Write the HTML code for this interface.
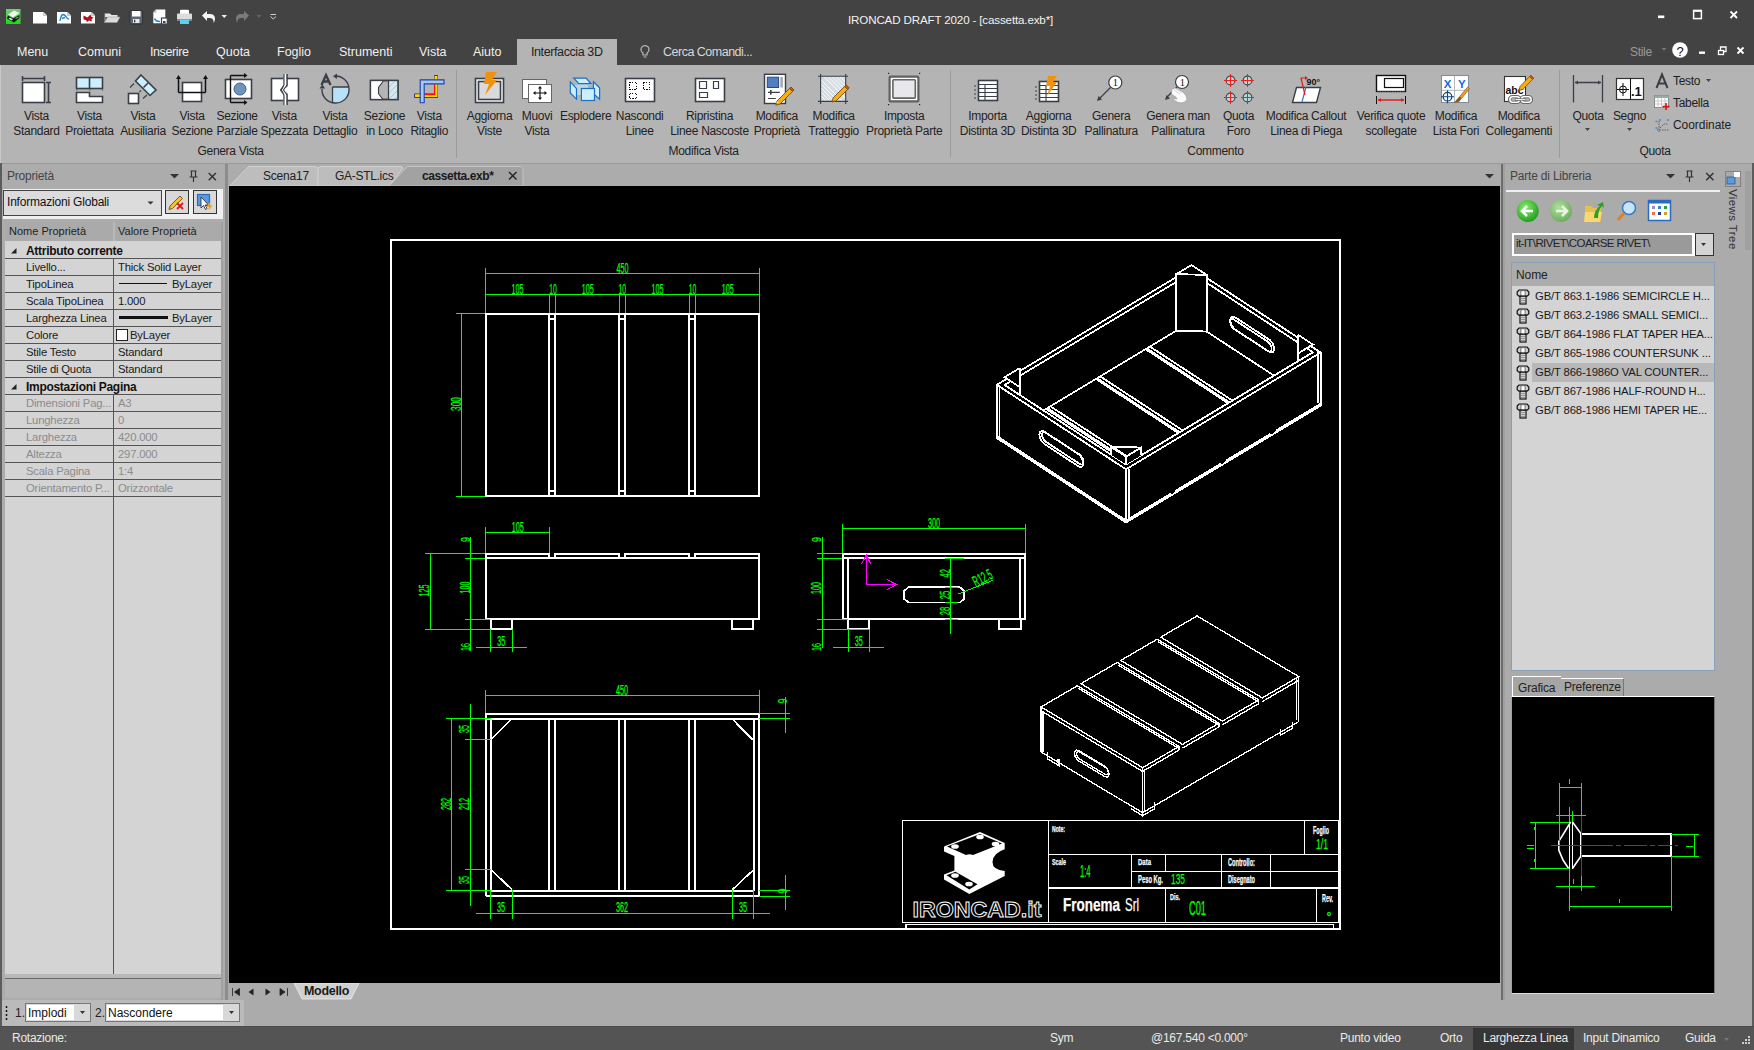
<!DOCTYPE html>
<html><head><meta charset="utf-8">
<style>
*{margin:0;padding:0;box-sizing:border-box}
html,body{width:1754px;height:1050px;overflow:hidden;background:#ababab;font-family:"Liberation Sans",sans-serif;font-size:12px;color:#1e1e1e}
.a{position:absolute}
.t{position:absolute;white-space:nowrap;line-height:1}
#title{left:0;top:0;width:1754px;height:38px;background:#434343}
#menu{left:0;top:38px;width:1754px;height:27px;background:#434343}
.mt{position:absolute;top:45.8px;color:#f0f0f0;font-size:12.5px;white-space:nowrap;line-height:1}
#ribbon{left:0;top:65px;width:1754px;height:99px;background:#b4b4b4;border-left:1px solid #c8c8c8;border-bottom:1px solid #9a9a9a}
.rl{position:absolute;font-size:12px;letter-spacing:-0.3px;color:#222;text-align:center;white-space:nowrap;line-height:15px}
.gl{position:absolute;top:144.5px;font-size:12px;letter-spacing:-0.3px;color:#222;white-space:nowrap;line-height:1}
.sep{position:absolute;top:70px;width:1px;height:88px;background:#9c9c9c}
#status{left:0;top:1026px;width:1754px;height:24px;background:#545454;border-top:1px solid #4a4a4a}
.st{position:absolute;top:1032px;color:#eaeaea;font-size:12px;letter-spacing:-0.25px;white-space:nowrap;line-height:1}
</style></head><body>
<div id="title" class="a"></div>
<div id="menu" class="a"></div>
<div class="t" style="left:848px;top:13.5px;color:#f2f2f2;font-size:11.6px;letter-spacing:-0.15px">IRONCAD DRAFT 2020 - [cassetta.exb*]</div>

<div class="mt" style="left:17px">Menu</div>
<div class="mt" style="left:78px">Comuni</div>
<div class="mt" style="left:150px;letter-spacing:-0.4px">Inserire</div>
<div class="mt" style="left:216px">Quota</div>
<div class="mt" style="left:277px">Foglio</div>
<div class="mt" style="left:339px">Strumenti</div>
<div class="mt" style="left:419px">Vista</div>
<div class="mt" style="left:473px">Aiuto</div>
<div class="a" style="left:517px;top:39px;width:100px;height:27px;background:#b4b4b4"></div>
<div class="mt" style="left:531px;color:#222;letter-spacing:-0.4px">Interfaccia 3D</div>
<div class="mt" style="left:663px;color:#d8d8d8;letter-spacing:-0.5px">Cerca Comandi...</div>
<div class="mt" style="left:1630px;color:#9a9a9a;font-size:12px;top:46px;letter-spacing:-0.3px">Stile</div>

<div id="ribbon" class="a"></div>

<svg class="a" style="left:0;top:0" width="1754" height="165" viewBox="0 0 1754 165">
<!-- QAT -->
<defs><linearGradient id="appg" x1="0" y1="0" x2="0" y2="1"><stop offset="0" stop-color="#7ac87a"/><stop offset="1" stop-color="#10e010"/></linearGradient></defs>
<rect x="6" y="9" width="14.5" height="15" fill="url(#appg)"/>
<path d="M8 14.5 L14 10.5 L19.5 13 L13 17.5Z" fill="#f4f4f4"/>
<path d="M8 15.5 L13 18.5 L19.5 15 L19.5 18 L14 22.5 L7 18.5Z" fill="#111"/>
<path d="M8.5 18.5l3 2l1.5-1l-3-2z" fill="#ddd"/><path d="M15.5 18l3-1.5v1l-3 1.5z" fill="#bbb"/>
<path d="M33 12h10.5l3.5 3.5v8h-14z" fill="#fff"/><path d="M43.5 12v3.5h3.5" fill="#ccc" stroke="#aaa" stroke-width="0.5"/>
<path d="M57 12h10.5l3.5 3.5v8h-14z" fill="#fff"/><path d="M67.5 12v3.5h3.5" fill="#ccc" stroke="#aaa" stroke-width="0.5"/>
<path d="M61 15.5q3-2 5 1.5M60 21q1-6 3-6.5q2 0 4 3.5l2 1.5M62 18.5l3-1" stroke="#1e88d8" stroke-width="1.4" fill="none"/>
<path d="M81 12h10.5l3.5 3.5v8h-14z" fill="#fff"/><path d="M91.5 12v3.5h3.5" fill="#ccc" stroke="#aaa" stroke-width="0.5"/>
<path d="M83.5 15.5l4 2l3-3l1 2.5l2 0.5l-2 2l0.5 2l-3-1l-2 1.5l-1-2l-2.5-0.5z" fill="#b80818"/><path d="M87 18l2 1l2-1" stroke="#e02020" stroke-width="1"/>
<path d="M105 13.5h5l1.5 1.5h6v2h-12.5z" fill="#e8e8e8"/><path d="M104.5 22.5l3-5.5h12.5l-3 5.5z" fill="#dcdcdc" stroke="#9a9a9a" stroke-width="0.6"/><path d="M105 13.5v9" stroke="#bbb" stroke-width="0.8"/>
<rect x="130" y="10.5" width="12.5" height="13.5" rx="1.5" fill="#5c6676" stroke="#2a2a2a" stroke-width="0.8"/><rect x="132" y="11" width="8.5" height="5.5" fill="#fff"/><rect x="133" y="19" width="6.5" height="4" fill="#e8e8e8"/><rect x="134" y="19.8" width="1.3" height="2.6" fill="#333"/>
<path d="M156 9.5h9.3v13.8h-12v-11z" fill="#fff"/><path d="M156 9.5v2.8h-2.7" fill="#ccc" stroke="#999" stroke-width="0.5"/>
<rect x="161.5" y="18" width="5.8" height="6" fill="#fff" stroke="#3a4456" stroke-width="1.2"/><rect x="163" y="21" width="2.5" height="2" fill="#3a4456"/>
<path d="M154.5 18.5q1 3 5.5 3" stroke="#1e88d8" stroke-width="1.5" fill="none"/>
<rect x="180" y="9.8" width="9" height="4.5" rx="1" fill="#fff"/><rect x="177" y="13.5" width="15" height="7" rx="0.8" fill="#dcdcdc"/><rect x="177" y="19" width="15" height="1.5" fill="#888"/><rect x="180" y="19.5" width="9" height="4.5" fill="#5bd0f5"/>
<path d="M202 15.5 l5 -4.5 v3 h3 q5 0 5 5 q0 2 -1.5 4 q0.5 -5 -4 -5 h-2.5 v3z" fill="#f4f4f4"/>
<path d="M221.5 15h5.5l-2.75 3z" fill="#f2f2f2"/>
<path d="M249 15.5 l-5 -4.5 v3 h-3 q-5 0 -5 5 q0 2 1.5 4 q-0.5 -5 4 -5 h2.5 v3z" fill="#7a7a7a"/>
<path d="M256.5 15h5l-2.5 2.8z" fill="#666"/>
<path d="M270.5 14.5h5.5M270.5 16.5l2.75 2.5l2.75 -2.5" stroke="#d0d0d0" fill="none" stroke-width="1"/>
<!-- window controls -->
<rect x="1658" y="15.5" width="6.3" height="2.6" fill="#fff"/>
<rect x="1693.6" y="10.6" width="7.8" height="8" fill="none" stroke="#fff" stroke-width="1.5"/><rect x="1693" y="9.8" width="9" height="2" fill="#fff"/>
<path d="M1730.5 11.5l6.5 6.5M1737 11.5l-6.5 6.5" stroke="#fff" stroke-width="1.8"/>
<!-- second row right -->
<path d="M1661.5 48h5l-2.5 2.8z" fill="#777"/>
<circle cx="1680" cy="50" r="7.8" fill="#fff"/>
<text x="1680" y="55.5" font-size="13" fill="#111" text-anchor="middle" font-family="Liberation Sans">?</text>
<rect x="1699" y="51.5" width="6" height="2.4" fill="#fff"/>
<rect x="1718.5" y="50.5" width="5" height="4" fill="none" stroke="#fff" stroke-width="1.3"/><path d="M1720.5 50v-3h5.5v4.5h-2" fill="none" stroke="#fff" stroke-width="1.3"/>
<path d="M1737.5 47.5l6 6M1743.5 47.5l-6 6" stroke="#fff" stroke-width="1.8"/>
<!-- lightbulb -->
<path d="M643 53 a4 4 0 1 1 4 0 v2 h-4z M643.5 57h3" fill="none" stroke="#bbb" stroke-width="1.2"/>
</svg>


<div class="rl" style="left:-23.5px;top:109px;width:120px">Vista<br>Standard</div>
<div class="rl" style="left:29.4px;top:109px;width:120px">Vista<br>Proiettata</div>
<div class="rl" style="left:83.0px;top:109px;width:120px">Vista<br>Ausiliaria</div>
<div class="rl" style="left:132.1px;top:109px;width:120px">Vista<br>Sezione</div>
<div class="rl" style="left:177.1px;top:109px;width:120px">Sezione<br>Parziale</div>
<div class="rl" style="left:224.3px;top:109px;width:120px">Vista<br>Spezzata</div>
<div class="rl" style="left:275.0px;top:109px;width:120px">Vista<br>Dettaglio</div>
<div class="rl" style="left:324.5px;top:109px;width:120px">Sezione<br>in Loco</div>
<div class="rl" style="left:369.3px;top:109px;width:120px">Vista<br>Ritaglio</div>
<div class="rl" style="left:429.5px;top:109px;width:120px">Aggiorna<br>Viste</div>
<div class="rl" style="left:477.0px;top:109px;width:120px">Muovi<br>Vista</div>
<div class="rl" style="left:525.6px;top:109px;width:120px">Esplodere</div>
<div class="rl" style="left:579.7px;top:109px;width:120px">Nascondi<br>Linee</div>
<div class="rl" style="left:649.5px;top:109px;width:120px">Ripristina<br>Linee Nascoste</div>
<div class="rl" style="left:716.8px;top:109px;width:120px">Modifica<br>Proprietà</div>
<div class="rl" style="left:773.6px;top:109px;width:120px">Modifica<br>Tratteggio</div>
<div class="rl" style="left:844.2px;top:109px;width:120px">Imposta<br>Proprietà Parte</div>
<div class="rl" style="left:927.5px;top:109px;width:120px">Importa<br>Distinta 3D</div>
<div class="rl" style="left:988.7px;top:109px;width:120px">Aggiorna<br>Distinta 3D</div>
<div class="rl" style="left:1051.2px;top:109px;width:120px">Genera<br>Pallinatura</div>
<div class="rl" style="left:1118.0px;top:109px;width:120px">Genera man<br>Pallinatura</div>
<div class="rl" style="left:1178.5px;top:109px;width:120px">Quota<br>Foro</div>
<div class="rl" style="left:1246.1px;top:109px;width:120px">Modifica Callout<br>Linea di Piega</div>
<div class="rl" style="left:1331.0px;top:109px;width:120px">Verifica quote<br>scollegate</div>
<div class="rl" style="left:1395.9px;top:109px;width:120px">Modifica<br>Lista Fori</div>
<div class="rl" style="left:1458.8px;top:109px;width:120px">Modifica<br>Collegamenti</div>
<div class="rl" style="left:1528.0px;top:109px;width:120px">Quota</div>
<div class="rl" style="left:1569.5px;top:109px;width:120px">Segno</div>
<div class="gl" style="left:170.6px;width:120px;text-align:center">Genera Vista</div>
<div class="gl" style="left:643.6px;width:120px;text-align:center">Modifica Vista</div>
<div class="gl" style="left:1155.5px;width:120px;text-align:center">Commento</div>
<div class="gl" style="left:1595.0px;width:120px;text-align:center">Quota</div>
<div class="sep" style="left:456.0px"></div>
<div class="sep" style="left:950.0px"></div>
<div class="sep" style="left:1559.0px"></div>
<div class="t" style="left:1673px;top:75px;font-size:12px;letter-spacing:-0.3px">Testo</div>
<div class="t" style="left:1673px;top:97px;font-size:12px;letter-spacing:-0.3px">Tabella</div>
<div class="t" style="left:1673px;top:119px;font-size:12px;letter-spacing:-0.05px">Coordinate</div>

<svg class="a" style="left:0;top:65px" width="1754" height="100" viewBox="0 65 1754 100">
<g stroke="#3a3f47" stroke-width="1.6" fill="#fff">
<!-- Vista Standard -->
<rect x="22.5" y="82.5" width="22" height="20"/>
<path d="M22.5 78.5h22M22.5 76v5M44.5 76v5M48.5 82.5v20M46 82.5h5M46 102.5h5" fill="none"/>
<!-- Vista Proiettata -->
<rect x="76.5" y="77.5" width="26" height="11" fill="#cdeefc"/><path d="M89.5 77.5v11" fill="none"/>
<path d="M76.5 92.5h13v4h13v6h-26z"/>
<path d="M76.5 90h1M89.5 90h1M102 90h1" stroke-width="1"/>
<!-- Vista Ausiliaria -->
<path d="M141 75 L156 90 L150 95.5 L135.5 81z" fill="#cdeefc"/>
<path d="M143.5 87.5 L148 83" fill="none"/>
<rect x="128.5" y="93.5" width="10" height="10"/>
<path d="M130 87.5l4 -4M139.5 92l1.5 -1.5M143 98.5l4 -3.5" fill="none" stroke-width="1.2"/>
<!-- Vista Sezione -->
<rect x="182.5" y="82.5" width="19" height="19"/>
<path d="M178.5 92.5h27M178.5 92.5v-14M205.5 92.5v-14" stroke="#111" stroke-width="1.5" fill="none"/>
<path d="M176 79l2.5 -4l2.5 4zM203 79l2.5 -4l2.5 4z" fill="#111" stroke="none"/>
<!-- Sezione Parziale -->
<rect x="225.5" y="79.5" width="26" height="19"/>
<circle cx="240" cy="89" r="6" fill="#6f93bb" stroke="#3f5f8a" stroke-width="1"/>
<path d="M230.5 75.5v27M230.5 75.5h14M230.5 102.5h14" stroke="#111" stroke-width="1.4" fill="none"/>
<path d="M244 73l3.5 2.5l-3.5 2.5zM244 100l3.5 2.5l-3.5 2.5z" fill="#111" stroke="none"/>
<!-- Vista Spezzata -->
<rect x="271.5" y="78.5" width="27" height="22"/>
<path d="M284 74v12l-3 4l3 4v11M287 74v12l-3 4l3 4v11" fill="none" stroke-width="1.2"/>
<rect x="283.5" y="74" width="3" height="31" fill="#fff" stroke="none"/>
<path d="M284 74v11l-3.5 5l3.5 5v10M287 74v11l-3.5 5l3.5 5v10" fill="none" stroke-width="1.1"/>
<!-- Vista Dettaglio -->
<path d="M332.5 87h16.5a13.5 13.5 0 0 1 -13.5 16h-3z" fill="#b8e0f8" stroke="none"/>
<path d="M334 76.2 A13.3 13.3 0 0 1 349 89" fill="none" stroke-width="1.4"/>
<path d="M349 89 A13.3 13.3 0 0 1 335 103" fill="none" stroke-width="1.4"/>
<path d="M335 103 A13.3 13.3 0 0 1 322 89" fill="none" stroke-width="1.4"/>
<path d="M332.5 87v16M332.5 87h16.5" fill="none" stroke-width="1.3"/>
<path d="M321.5 85l4.5 -10l4.5 10M323.2 81.5h5.6" fill="none" stroke-width="2.3"/>
<path d="M337 73.5l-4 2.8l4 2.8z M319.5 88.5l2.8 -4l2.8 4z" fill="#3a3f47" stroke="none"/>
<!-- Sezione in Loco -->
<rect x="370.5" y="80.5" width="27.5" height="19" fill="#b4b4b4"/>
<path d="M371 81h12.3l-4.8 6.5v6l4.8 6.5h-12.3z" fill="#fff" stroke="none"/>
<path d="M383.3 81l-4.8 6.5v6l4.8 6.5" fill="none" stroke-width="1.1"/>
<rect x="389" y="81" width="8.5" height="18" fill="#d4e8f4" stroke="none"/>
<path d="M389 87l6-6M389 93l8.5-8.5M389 99l8.5-8.5M395 99l2.5-2.5" stroke="#a8bccc" stroke-width="0.8" fill="none"/>
<rect x="370.5" y="80.5" width="27.5" height="19" fill="none" stroke-width="1.3"/>
<path d="M388.5 80.5v19" fill="none" stroke-width="1.2"/>
<!-- Vista Ritaglio -->
<path d="M434.5 75.5h3v19.5h-3zM414.5 94h23v3.5h-23z" fill="#ffd800" stroke="#1a2a70" stroke-width="0.9"/>
<path d="M434.5 76.3h3v20.5h-22.3v-2.3h19.3z" fill="#ffd800" stroke="none"/>
<path d="M434.6 84v10.5h-10.5" fill="none" stroke="#ff1010" stroke-width="1.3"/>
<path d="M420.2 102.7v-22.8h23.8v4h-19.8v18.8z" fill="#a8c8f0" stroke="#1a40b0" stroke-width="1.1"/>
<!-- Aggiorna Viste -->
<rect x="475.5" y="78.5" width="28" height="24"/>
<rect x="478.5" y="81.5" width="22" height="18" fill="#dadada"/>
<path d="M486 72h11l-5 8h5l-12 15l4 -11h-5z" fill="#f0920a" stroke="none"/>
<!-- Muovi Vista -->
<rect x="522.5" y="79.5" width="24" height="19" stroke="#666" stroke-width="1"/>
<rect x="528.5" y="84.5" width="23" height="18" stroke="#666" stroke-width="1"/>
<path d="M540 87v12M534 93h12" stroke="#111" stroke-width="1.2" fill="none"/>
<path d="M538 88.5l2-2.5l2 2.5zM538 97.5l2 2.5l2-2.5zM535.5 91l-2.5 2l2.5 2zM544.5 91l2.5 2l-2.5 2z" fill="#111" stroke="none"/>
<!-- Esplodere -->
<g stroke="#1a70c8" stroke-width="1.2" fill="#cdeefc" stroke-linejoin="miter">
<rect x="574.4" y="84.4" width="14" height="11" fill="#c8d4dc" stroke="#8ab8e0" stroke-width="0.9"/>
<path d="M573.7 78.2h12.3l4.9 5.3h-12.2z"/>
<path d="M570.3 81.8l6.2 6.7v10.6l-6.2-6.1z"/>
<path d="M593.4 81.8l6.2 6v11.3l-6.2-5.4z"/>
<rect x="581.4" y="88.5" width="13.1" height="12"/>
</g>
<!-- Nascondi Linee -->
<rect x="625.5" y="78.5" width="29" height="23"/>
<path d="M629.5 82.5h7v7h-7zM643.5 82.5h6v7h-6zM629.5 93.5h7v5h-7z" stroke="#111" stroke-dasharray="1.3 1.2" stroke-width="1.3" fill="none" shape-rendering="crispEdges"/>
<!-- Ripristina -->
<rect x="695.5" y="78.5" width="29" height="23"/>
<path d="M699.5 81.5h7v7h-7zM713.5 81.5h5v7h-5zM699.5 92.5h8v5h-8z" fill="none" stroke-width="1.2"/>
<!-- Modifica Proprieta -->
<rect x="764.5" y="74.3" width="21" height="29.2" fill="#fff" stroke-width="1.4"/>
<rect x="767.3" y="77.2" width="11.3" height="10.3" fill="#4f7fc0" stroke="#2a4a80" stroke-width="1"/>
<rect x="780.3" y="77" width="2.6" height="10.5" fill="#a8a8b0" stroke="none"/>
<path d="M768 92.4h11.8M768 98.5h7.7" stroke-width="1.1" fill="none"/>
<rect x="770" y="90" width="1.6" height="4.7" fill="#3a3f47" stroke="none"/>
<path d="M777 101l12.5-12.5l3 3l-12.5 12.5l-4.2 1.2z" fill="#f5b010" stroke="#7a4a10" stroke-width="0.9"/>
<path d="M789.5 88.5l1.5-1.5l3 3l-1.5 1.5z" fill="#c05a20" stroke="#7a4a10" stroke-width="0.9"/>
<path d="M777 101l-0.8 2.4l2.4-0.8z" fill="#ddd" stroke="none"/>
<!-- Modifica Tratteggio -->
<rect x="820.6" y="76.2" width="25.1" height="25.2" fill="#d6dde2" stroke="none"/>
<path d="M821 80l21 21M821 84l17 17M821 88l13 13M821 92l9 9M821 96l5 5M824 76.5l21.5 21.5M828 76.5l17.5 17.5M832 76.5l13.5 13.5M836 76.5l9.5 9.5M840 76.5l5.5 5.5" stroke="#fff" stroke-width="0.9"/>
<path d="M820.6 74v30M845.7 74v30M818 76.2h30M818 101.4h30" stroke-width="1.1" fill="none"/>
<path d="M833.2 97.8l11.5-11.5l3 3l-11.5 11.5l-4.2 1.2z" fill="#f5b010" stroke="#7a4a10" stroke-width="0.9"/>
<path d="M844.7 86.3l1.5-1.5l3 3l-1.5 1.5z" fill="#c05a20" stroke="#7a4a10" stroke-width="0.9"/>
<!-- Imposta Proprieta Parte -->
<rect x="889.6" y="76.7" width="28.8" height="24.7" rx="1" fill="#fff" stroke="#606060" stroke-width="2.2"/>
<rect x="892.9" y="79.7" width="22.4" height="18.4" rx="0.8" fill="#e8e8ec" stroke="#666" stroke-width="1.6"/>
<g fill="#222" stroke="none"><rect x="888" y="72.8" width="1.2" height="1.2"/><rect x="919" y="72.8" width="1.2" height="1.2"/><rect x="888" y="104" width="1.2" height="1.2"/><rect x="919" y="104" width="1.2" height="1.2"/></g>
<!-- Importa Distinta -->
<rect x="978.5" y="80.5" width="19" height="20" fill="#fff"/>
<path d="M978.5 84.5h19M978.5 88.5h19M978.5 92.5h19M978.5 96.5h19M985 84.5v16" stroke-width="1.1" fill="none"/>
<path d="M974 86h2M974 90h2M974 94h2M974 98h2" stroke-width="1" fill="none"/>
<!-- Aggiorna Distinta -->
<rect x="1039.5" y="81.5" width="19" height="20" fill="#fff"/>
<path d="M1039.5 85.5h19M1039.5 89.5h19M1039.5 93.5h19M1039.5 97.5h19M1046 85.5v16" stroke-width="1.1" fill="none"/>
<path d="M1035 87h2M1035 91h2M1035 95h2M1035 99h2" stroke-width="1" fill="none"/>
<path d="M1048 76h9l-4 6h4l-10 14l3 -10h-4z" fill="#f0920a" stroke="none"/>
<!-- Genera Pallinatura -->
<circle cx="1115.3" cy="82.5" r="6.5" stroke-width="1.2"/>
<text x="1115.3" y="86.3" font-size="10.5" text-anchor="middle" fill="#111" stroke="none" font-family="Liberation Serif">1</text>
<path d="M1110.5 87.5l-12 12" stroke-width="1.3" fill="none"/><path d="M1097 101l1.5-5l3.5 3.5z" fill="#3a3f47" stroke="none"/>
<!-- Genera man -->
<circle cx="1182" cy="82" r="6.5" stroke-width="1.2"/>
<text x="1182.3" y="85.5" font-size="10.5" text-anchor="middle" fill="#111" stroke="none" font-family="Liberation Serif">1</text>
<path d="M1177 87l-10 10" stroke-width="1.3" fill="none"/><path d="M1165 100l1.5-5l3.5 3.5z" fill="#3a3f47" stroke="none"/>
<path d="M1172 89q3-2 6 0l5 3q4 4 4 7q-1 4-6 4q-4 0-8-4q1-1 4 0q-1-3-5-4q-1-3 0-6z" fill="#fafafa" stroke="#9a9a9a" stroke-width="0.7"/><path d="M1174 90l6 4M1176 89l6 4" stroke="#bbb" stroke-width="0.6" fill="none"/>
</g>
<!-- Quota Foro crosshairs -->
<g fill="#b8d8dc" stroke="#444" stroke-width="1.1">
<circle cx="1230.5" cy="80.5" r="4.4"/><circle cx="1247.5" cy="80.5" r="4.4"/><circle cx="1230.5" cy="97.5" r="4.4"/><circle cx="1247.5" cy="97.5" r="4.4"/>
</g>
<path d="M1224 80.5h13M1230.5 74v13M1241 80.5h13M1247.5 74v13M1224 97.5h13M1230.5 91v13M1241 97.5h13M1247.5 91v13" stroke="#ff1818" stroke-width="1.2" fill="none" shape-rendering="crispEdges"/>
<!-- Modifica Callout -->
<path d="M1292.5 102.5l4-15h24l-4 15z" fill="#fff" stroke="#3a3f47" stroke-width="1.4"/>
<path d="M1302 102l4-15" stroke="#2a7fd4" stroke-width="1.2"/>
<path d="M1305 95l-4-17h5" stroke="#e01818" stroke-width="1.2" fill="none"/><path d="M1305 76l3 2l-3 2z" fill="#e01818"/>
<text x="1306.5" y="84.5" font-size="9" font-weight="bold" fill="#111" font-family="Liberation Sans">90°</text>
<!-- Verifica quote -->
<rect x="1376.5" y="75.5" width="29" height="16" fill="#fff" stroke="#111" stroke-width="1.4"/>
<rect x="1384.5" y="78.5" width="19" height="9" fill="none" stroke="#111" stroke-width="1.2"/>
<path d="M1377 91.5h28" stroke="#2050c0" stroke-width="1.2" stroke-dasharray="1.5 1"/>
<path d="M1376.5 96v8M1405.5 96v8" stroke="#111" stroke-width="1"/><path d="M1378 100h26" stroke="#e01818" stroke-width="1.4"/>
<path d="M1378 100l3-2v4zM1404 100l-3-2v4z" fill="#e01818"/>
<!-- Modifica Lista Fori -->
<rect x="1441.5" y="75.5" width="27" height="27" fill="#fff" stroke="#8090a0" stroke-width="1.1"/>
<path d="M1454.5 76v26M1442 90.3h26" stroke="#b0b8c0" stroke-width="1"/>
<text x="1447.7" y="88.2" font-size="11.5" font-weight="bold" fill="#1a6ad8" font-family="Liberation Sans" text-anchor="middle">X</text>
<text x="1461.8" y="88.2" font-size="11.5" font-weight="bold" fill="#1a6ad8" font-family="Liberation Sans" text-anchor="middle">Y</text>
<circle cx="1447.5" cy="96.7" r="4.3" fill="none" stroke="#104a80" stroke-width="1.2"/><path d="M1441 96.7h13M1447.5 90.2v13" stroke="#104a80" stroke-width="1.1"/>
<path d="M1469.5 88.5l-1.8-1.5l-8 9.5l2 1.8z" fill="#f0a020" stroke="#8a5a20" stroke-width="0.7"/>
<path d="M1459.5 96.5l2 1.8q-1 3-3.5 4l-5 0.8q3-2 4-4z" fill="#8a5a20"/>
<!-- Modifica Collegamenti -->
<rect x="1504.5" y="76.5" width="21" height="25" fill="#fff" stroke="#333" stroke-width="1.1"/>
<text x="1514.5" y="94" font-size="10.5" font-weight="bold" fill="#111" font-family="Liberation Sans" text-anchor="middle">abc</text>
<rect x="1508.5" y="95.5" width="12.5" height="8" rx="4" fill="#fff" stroke="#666" stroke-width="1.2"/><rect x="1511" y="97.8" width="7.5" height="3.4" rx="1.7" fill="#b4b4b4" stroke="#666" stroke-width="0.8"/>
<rect x="1520" y="95.5" width="12.5" height="8" rx="4" fill="#fff" stroke="#666" stroke-width="1.2"/><rect x="1522.5" y="97.8" width="7.5" height="3.4" rx="1.7" fill="#b4b4b4" stroke="#666" stroke-width="0.8"/>
<path d="M1515 99.5h11" stroke="#666" stroke-width="2.2"/><path d="M1515.5 99.5h10" stroke="#fff" stroke-width="0.9"/>
<path d="M1520 86.5l9.5-10l3 2.8l-9.5 10l-4 1.2z" fill="#f5b010" stroke="#7a4a10" stroke-width="0.8"/>
<path d="M1529.5 76.5l1.3-1.3l3 2.8l-1.3 1.3z" fill="#c05a20" stroke="#7a4a10" stroke-width="0.8"/>
<!-- Quota dim icon -->
<path d="M1573.5 75v27.5M1602.5 75v27.5M1575 82.5h26" stroke="#3a3f47" stroke-width="1.3" fill="none"/>
<path d="M1575 82.5l3-2v4zM1601 82.5l-3-2v4z" fill="#3a3f47"/>
<path d="M1585 128h5l-2.5 3z" fill="#444"/><path d="M1627 128h5l-2.5 3z" fill="#444"/>
<!-- Segno -->
<rect x="1616.5" y="78.5" width="27" height="21" fill="#fff" stroke="#333" stroke-width="1.2"/>
<path d="M1630.5 78.5v21M1617 89.5h12M1623 83v13" stroke="#111" stroke-width="1"/>
<circle cx="1623" cy="89.5" r="3.5" fill="none" stroke="#111" stroke-width="1"/>
<text x="1631" y="95.5" font-size="13" font-weight="bold" fill="#111" font-family="Liberation Sans">.1</text>
<!-- Testo A -->
<path d="M1656.5 88l5.5-13.5l5.5 13.5M1658.5 83.5h7" stroke="#3a3f47" stroke-width="2" fill="none"/>
<path d="M1706 79h5l-2.5 3z" fill="#444"/>
<!-- Tabella icon -->
<rect x="1654.5" y="95.5" width="14" height="12" fill="#fff" stroke="#888" stroke-width="1"/><rect x="1654.5" y="95.5" width="14" height="2.5" fill="#9aa"/>
<path d="M1654.5 101h14M1654.5 104h14M1658 98v10M1661.5 98v10M1665 98v10" stroke="#bbb" stroke-width="0.8"/>
<path d="M1666 103v7M1662.5 106.5h7" stroke="#d01010" stroke-width="1.5"/>
<!-- Coordinate icon -->
<path d="M1657 130h12M1659 121v11M1660 128l4-4h4" stroke="#555" stroke-width="0.9" fill="none" stroke-dasharray="1.5 1"/>
<path d="M1655.5 121.5h2M1659 120h2M1667 120h2M1655.5 128h2" stroke="#3a8ae0" stroke-width="1.5"/>
</svg>

<div class="a" style="left:0;top:163px;width:2px;height:863px;background:#5c5c5c"></div>
<div class="a" style="left:1752px;top:163px;width:2px;height:863px;background:#5c5c5c"></div>
<div class="a" style="left:2px;top:164px;width:223px;height:836px;background:#acacac"></div>
<div class="t" style="left:7px;top:170px;font-size:12px;color:#444;letter-spacing:-0.2px">Proprietà</div>
<svg class="a" style="left:160px;top:166px" width="64" height="20" viewBox="160 166 64 20">
<path d="M170 174h9l-4.5 4.5z" fill="#333"/>
<path d="M190.5 171h6M191.5 171v6h4v-6M189.5 177h8M193.5 177v5" stroke="#333" stroke-width="1.2" fill="none"/>
<path d="M208.7 173l7.2 7.2M215.9 173l-7.2 7.2" stroke="#333" stroke-width="1.5"/>
</svg>
<div class="a" style="left:3px;top:189px;width:220px;height:30px;background:#efefef"></div>
<div class="a" style="left:3px;top:190px;width:159px;height:26px;background:#dcdcdc;border:1px solid #444"></div>
<div class="t" style="left:7px;top:196px;font-size:12px;color:#111;letter-spacing:-0.2px">Informazioni Globali</div>
<svg class="a" style="left:146px;top:200px" width="10" height="6"><path d="M1.5 1.5h6l-3 3z" fill="#333"/></svg>
<div class="a" style="left:165px;top:190px;width:24px;height:24px;background:#d8d8d8;border:1px solid #333"></div>
<div class="a" style="left:193px;top:190px;width:24px;height:24px;background:#d8d8d8;border:1px solid #333"></div>
<svg class="a" style="left:165px;top:190px" width="54" height="24" viewBox="165 190 54 24">
<path d="M170 206l10-10l2.5 2.5l-10 10l-3.5 1z" fill="#f5c22a" stroke="#7a4a10" stroke-width="0.9"/>
<path d="M177 203l6 6M183 203l-6 6" stroke="#e01818" stroke-width="1.8"/>
<rect x="197.5" y="194.5" width="12" height="11" fill="#5a9ae0" stroke="#2a6ac0" stroke-width="1.2"/>
<path d="M201 197v11l2.5-2.5l2 4l1.5-1l-2-3.5h3.5z" fill="#fff" stroke="#222" stroke-width="0.8"/>
<path d="M210 203l-2 3h3l-2 3" stroke="#f0a010" stroke-width="1.5" fill="none"/>
</svg>
<div class="a" style="left:5px;top:222px;width:216px;height:752px;background:#d4d4d4"></div>
<div class="a" style="left:5px;top:222px;width:216px;height:19px;background:#aaaaaa"></div>
<div class="a" style="left:113px;top:222px;width:2px;height:19px;background:#b8b8b8"></div>
<div class="t" style="left:9px;top:226px;font-size:11px;color:#222">Nome Proprietà</div>
<div class="t" style="left:118px;top:226px;font-size:11px;color:#222">Valore Proprietà</div>
<div class="a" style="left:5px;top:258px;width:216px;height:1px;background:#555"></div>
<svg class="a" style="left:10px;top:247px" width="8" height="8"><path d="M1 6.5h5.5v-5.5z" fill="#222"/></svg>
<div class="t" style="left:26px;top:244.5px;font-size:12px;font-weight:bold;color:#111;letter-spacing:-0.3px">Attributo corrente</div>
<div class="a" style="left:5px;top:275px;width:216px;height:1px;background:#555"></div>
<div class="a" style="left:113px;top:259px;width:1px;height:16px;background:#555"></div>
<div class="t" style="left:26px;top:262px;font-size:11.3px;color:#1a1a1a;letter-spacing:-0.2px">Livello...</div>
<div class="t" style="left:118px;top:262px;font-size:11.3px;color:#1a1a1a;letter-spacing:-0.2px">Thick Solid Layer</div>
<div class="a" style="left:5px;top:292px;width:216px;height:1px;background:#555"></div>
<div class="a" style="left:113px;top:276px;width:1px;height:16px;background:#555"></div>
<div class="t" style="left:26px;top:279px;font-size:11.3px;color:#1a1a1a;letter-spacing:-0.2px">TipoLinea</div>
<div class="a" style="left:119px;top:283px;width:48px;height:1px;background:#111"></div>
<div class="t" style="left:172px;top:279px;font-size:11.3px;color:#1a1a1a;letter-spacing:-0.2px">ByLayer</div>
<div class="a" style="left:5px;top:309px;width:216px;height:1px;background:#555"></div>
<div class="a" style="left:113px;top:293px;width:1px;height:16px;background:#555"></div>
<div class="t" style="left:26px;top:296px;font-size:11.3px;color:#1a1a1a;letter-spacing:-0.2px">Scala TipoLinea</div>
<div class="t" style="left:118px;top:296px;font-size:11.3px;color:#1a1a1a;letter-spacing:-0.2px">1.000</div>
<div class="a" style="left:5px;top:326px;width:216px;height:1px;background:#555"></div>
<div class="a" style="left:113px;top:310px;width:1px;height:16px;background:#555"></div>
<div class="t" style="left:26px;top:313px;font-size:11.3px;color:#1a1a1a;letter-spacing:-0.2px">Larghezza Linea</div>
<div class="a" style="left:119px;top:316px;width:49px;height:3px;background:#111"></div>
<div class="t" style="left:172px;top:313px;font-size:11.3px;color:#1a1a1a;letter-spacing:-0.2px">ByLayer</div>
<div class="a" style="left:5px;top:343px;width:216px;height:1px;background:#555"></div>
<div class="a" style="left:113px;top:327px;width:1px;height:16px;background:#555"></div>
<div class="t" style="left:26px;top:330px;font-size:11.3px;color:#1a1a1a;letter-spacing:-0.2px">Colore</div>
<div class="a" style="left:116px;top:329px;width:12px;height:12px;background:#fff;border:1px solid #222"></div>
<div class="t" style="left:130px;top:330px;font-size:11.3px;color:#1a1a1a;letter-spacing:-0.2px">ByLayer</div>
<div class="a" style="left:5px;top:360px;width:216px;height:1px;background:#555"></div>
<div class="a" style="left:113px;top:344px;width:1px;height:16px;background:#555"></div>
<div class="t" style="left:26px;top:347px;font-size:11.3px;color:#1a1a1a;letter-spacing:-0.2px">Stile Testo</div>
<div class="t" style="left:118px;top:347px;font-size:11.3px;color:#1a1a1a;letter-spacing:-0.2px">Standard</div>
<div class="a" style="left:5px;top:377px;width:216px;height:1px;background:#555"></div>
<div class="a" style="left:113px;top:361px;width:1px;height:16px;background:#555"></div>
<div class="t" style="left:26px;top:364px;font-size:11.3px;color:#1a1a1a;letter-spacing:-0.2px">Stile di Quota</div>
<div class="t" style="left:118px;top:364px;font-size:11.3px;color:#1a1a1a;letter-spacing:-0.2px">Standard</div>
<div class="a" style="left:5px;top:394px;width:216px;height:1px;background:#555"></div>
<svg class="a" style="left:10px;top:383px" width="8" height="8"><path d="M1 6.5h5.5v-5.5z" fill="#222"/></svg>
<div class="t" style="left:26px;top:380.5px;font-size:12px;font-weight:bold;color:#111;letter-spacing:-0.3px">Impostazioni Pagina</div>
<div class="a" style="left:5px;top:411px;width:216px;height:1px;background:#555"></div>
<div class="a" style="left:113px;top:395px;width:1px;height:16px;background:#555"></div>
<div class="t" style="left:26px;top:398px;font-size:11.3px;color:#8c8c8c;letter-spacing:-0.2px">Dimensioni Pag...</div>
<div class="t" style="left:118px;top:398px;font-size:11.3px;color:#8c8c8c;letter-spacing:-0.2px">A3</div>
<div class="a" style="left:5px;top:428px;width:216px;height:1px;background:#555"></div>
<div class="a" style="left:113px;top:412px;width:1px;height:16px;background:#555"></div>
<div class="t" style="left:26px;top:415px;font-size:11.3px;color:#8c8c8c;letter-spacing:-0.2px">Lunghezza</div>
<div class="t" style="left:118px;top:415px;font-size:11.3px;color:#8c8c8c;letter-spacing:-0.2px">0</div>
<div class="a" style="left:5px;top:445px;width:216px;height:1px;background:#555"></div>
<div class="a" style="left:113px;top:429px;width:1px;height:16px;background:#555"></div>
<div class="t" style="left:26px;top:432px;font-size:11.3px;color:#8c8c8c;letter-spacing:-0.2px">Larghezza</div>
<div class="t" style="left:118px;top:432px;font-size:11.3px;color:#8c8c8c;letter-spacing:-0.2px">420.000</div>
<div class="a" style="left:5px;top:462px;width:216px;height:1px;background:#555"></div>
<div class="a" style="left:113px;top:446px;width:1px;height:16px;background:#555"></div>
<div class="t" style="left:26px;top:449px;font-size:11.3px;color:#8c8c8c;letter-spacing:-0.2px">Altezza</div>
<div class="t" style="left:118px;top:449px;font-size:11.3px;color:#8c8c8c;letter-spacing:-0.2px">297.000</div>
<div class="a" style="left:5px;top:479px;width:216px;height:1px;background:#555"></div>
<div class="a" style="left:113px;top:463px;width:1px;height:16px;background:#555"></div>
<div class="t" style="left:26px;top:466px;font-size:11.3px;color:#8c8c8c;letter-spacing:-0.2px">Scala Pagina</div>
<div class="t" style="left:118px;top:466px;font-size:11.3px;color:#8c8c8c;letter-spacing:-0.2px">1:4</div>
<div class="a" style="left:5px;top:496px;width:216px;height:1px;background:#555"></div>
<div class="a" style="left:113px;top:480px;width:1px;height:16px;background:#555"></div>
<div class="t" style="left:26px;top:483px;font-size:11.3px;color:#8c8c8c;letter-spacing:-0.2px">Orientamento P...</div>
<div class="t" style="left:118px;top:483px;font-size:11.3px;color:#8c8c8c;letter-spacing:-0.2px">Orizzontale</div>
<div class="a" style="left:113px;top:497px;width:1px;height:477px;background:#555"></div>
<div class="a" style="left:5px;top:974px;width:216px;height:4px;background:#b9b9b9"></div>
<div class="a" style="left:5px;top:978px;width:216px;height:1px;background:#6a6a6a"></div>
<div class="a" style="left:5px;top:979px;width:216px;height:19px;background:#b4b4b4"></div>
<div class="a" style="left:221px;top:222px;width:2px;height:778px;background:#a0a0a0"></div>
<div class="a" style="left:225px;top:164px;width:3px;height:836px;background:#8c8c8c"></div>

<div class="a" style="left:2px;top:1000px;width:242px;height:26px;background:#bababa"></div>
<svg class="a" style="left:4px;top:1004px" width="6" height="18"><path d="M2.5 2v2M2.5 6v2M2.5 10v2M2.5 14v2" stroke="#111" stroke-width="1.5"/></svg>
<div class="t" style="left:15px;top:1007px;font-size:12px;color:#222">1.</div>
<div class="a" style="left:25px;top:1003px;width:66px;height:19px;background:#d8d8d8;border:1px solid #777"></div>
<div class="a" style="left:27px;top:1005px;width:47px;height:15px;background:#fff"></div>
<div class="t" style="left:28px;top:1007px;font-size:12px;color:#111">Implodi</div>
<svg class="a" style="left:79px;top:1010px" width="8" height="5"><path d="M1 1h5l-2.5 3z" fill="#333"/></svg>
<div class="t" style="left:95px;top:1007px;font-size:12px;color:#222">2.</div>
<div class="a" style="left:105px;top:1003px;width:135px;height:19px;background:#d8d8d8;border:1px solid #777"></div>
<div class="a" style="left:107px;top:1005px;width:116px;height:15px;background:#fff"></div>
<div class="t" style="left:108px;top:1007px;font-size:12px;color:#111">Nascondere</div>
<svg class="a" style="left:228px;top:1010px" width="8" height="5"><path d="M1 1h5l-2.5 3z" fill="#333"/></svg>
<div class="a" style="left:228px;top:164px;width:1274px;height:22px;background:#acacac"></div>
<svg class="a" style="left:228px;top:164px" width="1274" height="22" viewBox="228 164 1274 22">
<path d="M229.5 186 L248.5 166.5 H316 L318 168 V186Z" fill="#bdbdbd" stroke="#d0d0d0" stroke-width="1"/>
<path d="M318 186 V168 L320 166.5 H401 L403 168 L389 186Z" fill="#bdbdbd" stroke="#d0d0d0" stroke-width="1"/>
<path d="M389 186 L407.5 166.5 H521 L523 168.5 V186Z" fill="#a2a2a2" stroke="#c4c4c4" stroke-width="1"/>
<path d="M509 172l7.5 7.5M516.5 172l-7.5 7.5" stroke="#222" stroke-width="1.4"/>
<path d="M1485 174h9l-4.5 4.5z" fill="#333"/>
</svg>
<div class="t" style="left:263px;top:170px;font-size:12px;color:#222;letter-spacing:-0.2px">Scena17</div>
<div class="t" style="left:335px;top:170px;font-size:12px;color:#222;letter-spacing:-0.3px">GA-STL.ics</div>
<div class="t" style="left:422px;top:170px;font-size:12px;color:#1a1a1a;font-weight:bold;letter-spacing:-0.4px">cassetta.exb*</div>
<div class="a" style="left:229px;top:186px;width:1271px;height:797px;background:#000"></div>
<!--DRAWING--><svg class="a" style="left:229px;top:186px" width="1271" height="797" viewBox="229 186 1271 797"><g shape-rendering="crispEdges"><rect x="391" y="240" width="949" height="688.5" fill="none" stroke="#ffffff" stroke-width="2"/>
<rect x="485.5" y="313.5" width="273.5" height="182.5" fill="none" stroke="#ffffff" stroke-width="2"/>
<line x1="549" y1="313.5" x2="549" y2="496" stroke="#ffffff" stroke-width="2"/>
<line x1="555" y1="313.5" x2="555" y2="496" stroke="#ffffff" stroke-width="2"/>
<line x1="619" y1="313.5" x2="619" y2="496" stroke="#ffffff" stroke-width="2"/>
<line x1="625" y1="313.5" x2="625" y2="496" stroke="#ffffff" stroke-width="2"/>
<line x1="689" y1="313.5" x2="689" y2="496" stroke="#ffffff" stroke-width="2"/>
<line x1="695" y1="313.5" x2="695" y2="496" stroke="#ffffff" stroke-width="2"/>
<line x1="549" y1="319" x2="555" y2="319" stroke="#ffffff" stroke-width="1.5"/>
<line x1="549" y1="491" x2="555" y2="491" stroke="#ffffff" stroke-width="1.5"/>
<line x1="619" y1="319" x2="625" y2="319" stroke="#ffffff" stroke-width="1.5"/>
<line x1="619" y1="491" x2="625" y2="491" stroke="#ffffff" stroke-width="1.5"/>
<line x1="689" y1="319" x2="695" y2="319" stroke="#ffffff" stroke-width="1.5"/>
<line x1="689" y1="491" x2="695" y2="491" stroke="#ffffff" stroke-width="1.5"/>
<line x1="485.5" y1="268" x2="485.5" y2="313" stroke="#00ff00" stroke-width="1"/>
<line x1="759.5" y1="268" x2="759.5" y2="313" stroke="#00ff00" stroke-width="1"/>
<line x1="485.5" y1="273.5" x2="759.5" y2="273.5" stroke="#00ff00" stroke-width="1"/>
<line x1="485.5" y1="294.5" x2="759.5" y2="294.5" stroke="#00ff00" stroke-width="1"/>
<line x1="549.5" y1="294" x2="549.5" y2="313" stroke="#00ff00" stroke-width="1"/>
<line x1="555.5" y1="294" x2="555.5" y2="313" stroke="#00ff00" stroke-width="1"/>
<line x1="619.5" y1="294" x2="619.5" y2="313" stroke="#00ff00" stroke-width="1"/>
<line x1="625.5" y1="294" x2="625.5" y2="313" stroke="#00ff00" stroke-width="1"/>
<line x1="689.5" y1="294" x2="689.5" y2="313" stroke="#00ff00" stroke-width="1"/>
<line x1="695.5" y1="294" x2="695.5" y2="313" stroke="#00ff00" stroke-width="1"/>
<line x1="456" y1="313.5" x2="485" y2="313.5" stroke="#00ff00" stroke-width="1"/>
<line x1="456" y1="496.5" x2="485" y2="496.5" stroke="#00ff00" stroke-width="1"/>
<line x1="461.5" y1="313.5" x2="461.5" y2="496.5" stroke="#00ff00" stroke-width="1"/>
<polyline points="485.5,558 485.5,553.5 549,553.5 549,558" fill="none" stroke="#ffffff" stroke-width="2" stroke-linejoin="miter"/>
<polyline points="555,558 555,553.5 619,553.5 619,558" fill="none" stroke="#ffffff" stroke-width="2" stroke-linejoin="miter"/>
<polyline points="625,558 625,553.5 689,553.5 689,558" fill="none" stroke="#ffffff" stroke-width="2" stroke-linejoin="miter"/>
<polyline points="695,558 695,553.5 759,553.5 759,558" fill="none" stroke="#ffffff" stroke-width="2" stroke-linejoin="miter"/>
<rect x="485.5" y="558" width="273.5" height="61" fill="none" stroke="#ffffff" stroke-width="2"/>
<polyline points="490.5,619 490.5,628.5 512,628.5 512,619" fill="none" stroke="#ffffff" stroke-width="2" stroke-linejoin="miter"/>
<polyline points="732,619 732,628.5 753,628.5 753,619" fill="none" stroke="#ffffff" stroke-width="2" stroke-linejoin="miter"/>
<line x1="485.5" y1="527" x2="485.5" y2="553" stroke="#00ff00" stroke-width="1"/>
<line x1="549.5" y1="527" x2="549.5" y2="553" stroke="#00ff00" stroke-width="1"/>
<line x1="485.5" y1="532.5" x2="549.5" y2="532.5" stroke="#00ff00" stroke-width="1"/>
<line x1="430.5" y1="553.5" x2="430.5" y2="629.5" stroke="#00ff00" stroke-width="1"/>
<line x1="425" y1="553.5" x2="485" y2="553.5" stroke="#00ff00" stroke-width="1"/>
<line x1="425" y1="629.5" x2="490" y2="629.5" stroke="#00ff00" stroke-width="1"/>
<line x1="470.5" y1="537" x2="470.5" y2="651" stroke="#00ff00" stroke-width="1"/>
<line x1="465" y1="558.5" x2="485" y2="558.5" stroke="#00ff00" stroke-width="1"/>
<line x1="465" y1="619.5" x2="490" y2="619.5" stroke="#00ff00" stroke-width="1"/>
<line x1="476" y1="647.5" x2="527" y2="647.5" stroke="#00ff00" stroke-width="1"/>
<line x1="490.5" y1="629" x2="490.5" y2="652" stroke="#00ff00" stroke-width="1"/>
<line x1="512.5" y1="629" x2="512.5" y2="652" stroke="#00ff00" stroke-width="1"/>
<rect x="842.5" y="553.5" width="182.5" height="4.5" fill="none" stroke="#ffffff" stroke-width="2"/>
<rect x="842.5" y="558" width="182.5" height="61" fill="none" stroke="#ffffff" stroke-width="2"/>
<line x1="848" y1="558" x2="848" y2="619" stroke="#ffffff" stroke-width="2"/>
<line x1="1020" y1="558" x2="1020" y2="619" stroke="#ffffff" stroke-width="2"/>
<polyline points="848,619 848,628.5 869,628.5 869,619" fill="none" stroke="#ffffff" stroke-width="2" stroke-linejoin="miter"/>
<polyline points="998.5,619 998.5,628.5 1020.5,628.5 1020.5,619" fill="none" stroke="#ffffff" stroke-width="2" stroke-linejoin="miter"/>
<polygon points="908.9,587 959.7,587 964.3,591 964.3,599 959.7,602.5 908.9,602.5 904,599 904,591" fill="none" stroke="#ffffff" stroke-width="1.7" stroke-linejoin="miter"/>
<line x1="945" y1="587" x2="958" y2="587" stroke="#00ff00" stroke-width="1"/>
<line x1="945" y1="602.5" x2="958" y2="602.5" stroke="#00ff00" stroke-width="1"/>
<line x1="842.5" y1="524" x2="842.5" y2="553" stroke="#00ff00" stroke-width="1"/>
<line x1="1025.5" y1="524" x2="1025.5" y2="553" stroke="#00ff00" stroke-width="1"/>
<line x1="842.5" y1="528.5" x2="1025.5" y2="528.5" stroke="#00ff00" stroke-width="1"/>
<line x1="822.5" y1="537" x2="822.5" y2="648" stroke="#00ff00" stroke-width="1"/>
<line x1="817" y1="553.5" x2="842" y2="553.5" stroke="#00ff00" stroke-width="1"/>
<line x1="817" y1="558.5" x2="842" y2="558.5" stroke="#00ff00" stroke-width="1"/>
<line x1="817" y1="619.5" x2="848" y2="619.5" stroke="#00ff00" stroke-width="1"/>
<line x1="817" y1="629.5" x2="869" y2="629.5" stroke="#00ff00" stroke-width="1"/>
<line x1="833" y1="647.5" x2="884" y2="647.5" stroke="#00ff00" stroke-width="1"/>
<line x1="848.5" y1="629" x2="848.5" y2="652" stroke="#00ff00" stroke-width="1"/>
<line x1="869.5" y1="629" x2="869.5" y2="652" stroke="#00ff00" stroke-width="1"/>
<line x1="950.5" y1="558" x2="950.5" y2="634" stroke="#00ff00" stroke-width="1"/>
<line x1="945" y1="558.5" x2="964" y2="558.5" stroke="#00ff00" stroke-width="1"/>
<line x1="945" y1="619.5" x2="958" y2="619.5" stroke="#00ff00" stroke-width="1"/>
<line x1="957.6" y1="594.2" x2="992.8" y2="580.4" stroke="#00ff00" stroke-width="1"/>
<line x1="866.2" y1="555" x2="866.2" y2="584.6" stroke="#ff00ff" stroke-width="1.2"/>
<line x1="866.2" y1="584.6" x2="896.8" y2="584.6" stroke="#ff00ff" stroke-width="1.2"/>
<polyline points="861.5,564 866.2,555 870.9,564" fill="none" stroke="#ff00ff" stroke-width="1.2" stroke-linejoin="miter"/>
<polyline points="887,579.5 896.8,584.6 887,589.5" fill="none" stroke="#ff00ff" stroke-width="1.2" stroke-linejoin="miter"/>
<rect x="485.5" y="713.5" width="273.5" height="5.0" fill="none" stroke="#ffffff" stroke-width="2"/>
<line x1="485.5" y1="718.5" x2="485.5" y2="896" stroke="#ffffff" stroke-width="2"/>
<line x1="759" y1="718.5" x2="759" y2="896" stroke="#ffffff" stroke-width="2"/>
<line x1="485.5" y1="896" x2="759" y2="896" stroke="#ffffff" stroke-width="2"/>
<line x1="490.5" y1="718.5" x2="490.5" y2="890.5" stroke="#ffffff" stroke-width="2"/>
<line x1="753.5" y1="718.5" x2="753.5" y2="890.5" stroke="#ffffff" stroke-width="2"/>
<line x1="490.5" y1="890.5" x2="753.5" y2="890.5" stroke="#ffffff" stroke-width="2"/>
<line x1="549" y1="718.5" x2="549" y2="890.5" stroke="#ffffff" stroke-width="2"/>
<line x1="555" y1="718.5" x2="555" y2="890.5" stroke="#ffffff" stroke-width="2"/>
<line x1="619" y1="718.5" x2="619" y2="890.5" stroke="#ffffff" stroke-width="2"/>
<line x1="625" y1="718.5" x2="625" y2="890.5" stroke="#ffffff" stroke-width="2"/>
<line x1="689" y1="718.5" x2="689" y2="890.5" stroke="#ffffff" stroke-width="2"/>
<line x1="695" y1="718.5" x2="695" y2="890.5" stroke="#ffffff" stroke-width="2"/>
<line x1="491" y1="739.3" x2="511.5" y2="718.8" stroke="#ffffff" stroke-width="1.6"/>
<line x1="491" y1="869.4" x2="511.7" y2="889.5" stroke="#ffffff" stroke-width="1.6"/>
<line x1="732" y1="718.8" x2="753" y2="740" stroke="#ffffff" stroke-width="1.6"/>
<line x1="753" y1="870.3" x2="732" y2="890" stroke="#ffffff" stroke-width="1.6"/>
<line x1="485.5" y1="690" x2="485.5" y2="713" stroke="#00ff00" stroke-width="1"/>
<line x1="759.5" y1="690" x2="759.5" y2="713" stroke="#00ff00" stroke-width="1"/>
<line x1="485.5" y1="695.5" x2="759.5" y2="695.5" stroke="#00ff00" stroke-width="1"/>
<line x1="451.5" y1="718.5" x2="451.5" y2="890.5" stroke="#00ff00" stroke-width="1"/>
<line x1="446" y1="718.5" x2="491" y2="718.5" stroke="#00ff00" stroke-width="1"/>
<line x1="446" y1="890.5" x2="491" y2="890.5" stroke="#00ff00" stroke-width="1"/>
<line x1="470.5" y1="704" x2="470.5" y2="905.5" stroke="#00ff00" stroke-width="1"/>
<line x1="465" y1="739.5" x2="491" y2="739.5" stroke="#00ff00" stroke-width="1"/>
<line x1="465" y1="869.5" x2="491" y2="869.5" stroke="#00ff00" stroke-width="1"/>
<line x1="476" y1="913.5" x2="770" y2="913.5" stroke="#00ff00" stroke-width="1"/>
<line x1="490.5" y1="890" x2="490.5" y2="919" stroke="#00ff00" stroke-width="1"/>
<line x1="512.5" y1="890" x2="512.5" y2="919" stroke="#00ff00" stroke-width="1"/>
<line x1="732.5" y1="890" x2="732.5" y2="919" stroke="#00ff00" stroke-width="1"/>
<line x1="753.5" y1="890" x2="753.5" y2="919" stroke="#00ff00" stroke-width="1"/>
<line x1="785.5" y1="697" x2="785.5" y2="733" stroke="#00ff00" stroke-width="1"/>
<line x1="759" y1="713.5" x2="790" y2="713.5" stroke="#00ff00" stroke-width="1"/>
<line x1="759" y1="718.5" x2="790" y2="718.5" stroke="#00ff00" stroke-width="1"/>
<line x1="785.5" y1="875" x2="785.5" y2="910" stroke="#00ff00" stroke-width="1"/>
<line x1="759" y1="890.5" x2="790" y2="890.5" stroke="#00ff00" stroke-width="1"/>
<line x1="759" y1="896.5" x2="790" y2="896.5" stroke="#00ff00" stroke-width="1"/>
<rect x="902.5" y="820.5" width="436.5" height="102.0" fill="none" stroke="#ffffff" stroke-width="1.5"/>
<line x1="1048.6" y1="820.5" x2="1048.6" y2="922.5" stroke="#ffffff" stroke-width="1.5"/>
<line x1="1048.6" y1="854.4" x2="1339" y2="854.4" stroke="#ffffff" stroke-width="1.5"/>
<line x1="1048.6" y1="888.1" x2="1339" y2="888.1" stroke="#ffffff" stroke-width="1.5"/>
<line x1="1304.3" y1="820.5" x2="1304.3" y2="854.4" stroke="#ffffff" stroke-width="1.5"/>
<line x1="1131.4" y1="854.4" x2="1131.4" y2="888.1" stroke="#ffffff" stroke-width="1.5"/>
<line x1="1165.4" y1="854.4" x2="1165.4" y2="871.3" stroke="#ffffff" stroke-width="1.5"/>
<line x1="1165.4" y1="888.1" x2="1165.4" y2="922.5" stroke="#ffffff" stroke-width="1.5"/>
<line x1="1221.4" y1="854.4" x2="1221.4" y2="888.1" stroke="#ffffff" stroke-width="1.5"/>
<line x1="1270.6" y1="854.4" x2="1270.6" y2="888.1" stroke="#ffffff" stroke-width="1.5"/>
<line x1="1131.4" y1="871.3" x2="1339" y2="871.3" stroke="#ffffff" stroke-width="1.5"/>
<line x1="1316.3" y1="888.1" x2="1316.3" y2="922.5" stroke="#ffffff" stroke-width="1.5"/>
<polyline points="906,929 906,924.7 1333.4,924.7 1333.4,929" fill="none" stroke="#ffffff" stroke-width="1.5" stroke-linejoin="miter"/>
<path d="M944 846.4 L980 832 L1004.7 843 L1004.7 849.3 Q993 853 992.5 862 Q992.5 870 1004.7 871 L1004.7 876.1 L969.3 894 L944 879.6 L944 874.4 L954.4 870.4 L954.4 856.1 L944 851.6 Z" fill="#fff" shape-rendering="geometricPrecision"/>
<polygon points="947,846.5 980,834 1002,843.5 969.3,856.5" fill="#000" shape-rendering="geometricPrecision"/>
<polygon points="946.5,875.3 955.5,871.8 977.5,884.3 969.3,889.5" fill="#000" shape-rendering="geometricPrecision"/>
<ellipse cx="955" cy="846.5" rx="3.8" ry="2.3" fill="#fff" shape-rendering="geometricPrecision"/>
<ellipse cx="980" cy="837" rx="3.8" ry="2.3" fill="#fff" shape-rendering="geometricPrecision"/>
<ellipse cx="995.5" cy="844" rx="3.8" ry="2.3" fill="#fff" shape-rendering="geometricPrecision"/>
<ellipse cx="969.5" cy="856.5" rx="3.8" ry="2.3" fill="#fff" shape-rendering="geometricPrecision"/>
<ellipse cx="955" cy="875.5" rx="3.8" ry="2.3" fill="#fff" shape-rendering="geometricPrecision"/>
<ellipse cx="969" cy="884" rx="3.8" ry="2.3" fill="#fff" shape-rendering="geometricPrecision"/></g><text x="622.4" y="272.5" font-family="Liberation Sans" font-size="14.39" fill="#00ff00" stroke="#00ff00" stroke-width="0.25" text-anchor="middle" textLength="12" lengthAdjust="spacingAndGlyphs">450</text>
<text x="517.5" y="293.5" font-family="Liberation Sans" font-size="14.39" fill="#00ff00" stroke="#00ff00" stroke-width="0.25" text-anchor="middle" textLength="12" lengthAdjust="spacingAndGlyphs">105</text>
<text x="552.9" y="293.5" font-family="Liberation Sans" font-size="14.39" fill="#00ff00" stroke="#00ff00" stroke-width="0.25" text-anchor="middle" textLength="7.5" lengthAdjust="spacingAndGlyphs">10</text>
<text x="587.7" y="293.5" font-family="Liberation Sans" font-size="14.39" fill="#00ff00" stroke="#00ff00" stroke-width="0.25" text-anchor="middle" textLength="12" lengthAdjust="spacingAndGlyphs">105</text>
<text x="622.2" y="293.5" font-family="Liberation Sans" font-size="14.39" fill="#00ff00" stroke="#00ff00" stroke-width="0.25" text-anchor="middle" textLength="7.5" lengthAdjust="spacingAndGlyphs">10</text>
<text x="657.6" y="293.5" font-family="Liberation Sans" font-size="14.39" fill="#00ff00" stroke="#00ff00" stroke-width="0.25" text-anchor="middle" textLength="12" lengthAdjust="spacingAndGlyphs">105</text>
<text x="692.4" y="293.5" font-family="Liberation Sans" font-size="14.39" fill="#00ff00" stroke="#00ff00" stroke-width="0.25" text-anchor="middle" textLength="7.5" lengthAdjust="spacingAndGlyphs">10</text>
<text x="727.7" y="293.5" font-family="Liberation Sans" font-size="14.39" fill="#00ff00" stroke="#00ff00" stroke-width="0.25" text-anchor="middle" textLength="12" lengthAdjust="spacingAndGlyphs">105</text>
<text transform="translate(456,404) rotate(-90)" x="0" y="4.75" font-family="Liberation Sans" font-size="14.39" fill="#00ff00" stroke="#00ff00" stroke-width="0.25" text-anchor="middle" textLength="14" lengthAdjust="spacingAndGlyphs">300</text>
<text x="517.7" y="531.5" font-family="Liberation Sans" font-size="14.39" fill="#00ff00" stroke="#00ff00" stroke-width="0.25" text-anchor="middle" textLength="12" lengthAdjust="spacingAndGlyphs">105</text>
<text transform="translate(424.3,590.5) rotate(-90)" x="0" y="4.75" font-family="Liberation Sans" font-size="14.39" fill="#00ff00" stroke="#00ff00" stroke-width="0.25" text-anchor="middle" textLength="12" lengthAdjust="spacingAndGlyphs">125</text>
<text transform="translate(465,539.5) rotate(-90)" x="0" y="4.50" font-family="Liberation Sans" font-size="13.64" fill="#00ff00" stroke="#00ff00" stroke-width="0.25" text-anchor="middle" textLength="5" lengthAdjust="spacingAndGlyphs">9</text>
<text transform="translate(465,587.5) rotate(-90)" x="0" y="4.75" font-family="Liberation Sans" font-size="14.39" fill="#00ff00" stroke="#00ff00" stroke-width="0.25" text-anchor="middle" textLength="12" lengthAdjust="spacingAndGlyphs">100</text>
<text transform="translate(465,647) rotate(-90)" x="0" y="4.50" font-family="Liberation Sans" font-size="13.64" fill="#00ff00" stroke="#00ff00" stroke-width="0.25" text-anchor="middle" textLength="8" lengthAdjust="spacingAndGlyphs">16</text>
<text x="501.3" y="645.5" font-family="Liberation Sans" font-size="14.39" fill="#00ff00" stroke="#00ff00" stroke-width="0.25" text-anchor="middle" textLength="8" lengthAdjust="spacingAndGlyphs">35</text>
<text x="934" y="527.5" font-family="Liberation Sans" font-size="14.39" fill="#00ff00" stroke="#00ff00" stroke-width="0.25" text-anchor="middle" textLength="12" lengthAdjust="spacingAndGlyphs">300</text>
<text transform="translate(816,539.5) rotate(-90)" x="0" y="4.50" font-family="Liberation Sans" font-size="13.64" fill="#00ff00" stroke="#00ff00" stroke-width="0.25" text-anchor="middle" textLength="5" lengthAdjust="spacingAndGlyphs">9</text>
<text transform="translate(816,588) rotate(-90)" x="0" y="4.75" font-family="Liberation Sans" font-size="14.39" fill="#00ff00" stroke="#00ff00" stroke-width="0.25" text-anchor="middle" textLength="12" lengthAdjust="spacingAndGlyphs">100</text>
<text transform="translate(816,647) rotate(-90)" x="0" y="4.50" font-family="Liberation Sans" font-size="13.64" fill="#00ff00" stroke="#00ff00" stroke-width="0.25" text-anchor="middle" textLength="8" lengthAdjust="spacingAndGlyphs">16</text>
<text x="858.8" y="645.5" font-family="Liberation Sans" font-size="14.39" fill="#00ff00" stroke="#00ff00" stroke-width="0.25" text-anchor="middle" textLength="8" lengthAdjust="spacingAndGlyphs">35</text>
<text transform="translate(945,573.2) rotate(-90)" x="0" y="4.75" font-family="Liberation Sans" font-size="14.39" fill="#00ff00" stroke="#00ff00" stroke-width="0.25" text-anchor="middle" textLength="8.5" lengthAdjust="spacingAndGlyphs">42</text>
<text transform="translate(945,595) rotate(-90)" x="0" y="4.75" font-family="Liberation Sans" font-size="14.39" fill="#00ff00" stroke="#00ff00" stroke-width="0.25" text-anchor="middle" textLength="8.5" lengthAdjust="spacingAndGlyphs">25</text>
<text transform="translate(945,611) rotate(-90)" x="0" y="4.75" font-family="Liberation Sans" font-size="14.39" fill="#00ff00" stroke="#00ff00" stroke-width="0.25" text-anchor="middle" textLength="8.5" lengthAdjust="spacingAndGlyphs">28</text>
<text transform="translate(982.5,578) rotate(-27)" x="0" y="5.00" font-family="Liberation Sans" font-size="15.15" fill="#00ff00" stroke="#00ff00" stroke-width="0.25" text-anchor="middle" textLength="20" lengthAdjust="spacingAndGlyphs">R12.5</text>
<text x="622" y="694.5" font-family="Liberation Sans" font-size="14.39" fill="#00ff00" stroke="#00ff00" stroke-width="0.25" text-anchor="middle" textLength="12" lengthAdjust="spacingAndGlyphs">450</text>
<text transform="translate(446,804) rotate(-90)" x="0" y="4.75" font-family="Liberation Sans" font-size="14.39" fill="#00ff00" stroke="#00ff00" stroke-width="0.25" text-anchor="middle" textLength="12" lengthAdjust="spacingAndGlyphs">282</text>
<text transform="translate(464,729) rotate(-90)" x="0" y="4.75" font-family="Liberation Sans" font-size="14.39" fill="#00ff00" stroke="#00ff00" stroke-width="0.25" text-anchor="middle" textLength="8" lengthAdjust="spacingAndGlyphs">35</text>
<text transform="translate(464,804) rotate(-90)" x="0" y="4.75" font-family="Liberation Sans" font-size="14.39" fill="#00ff00" stroke="#00ff00" stroke-width="0.25" text-anchor="middle" textLength="12" lengthAdjust="spacingAndGlyphs">212</text>
<text transform="translate(464,880) rotate(-90)" x="0" y="4.75" font-family="Liberation Sans" font-size="14.39" fill="#00ff00" stroke="#00ff00" stroke-width="0.25" text-anchor="middle" textLength="8" lengthAdjust="spacingAndGlyphs">35</text>
<text x="501" y="912" font-family="Liberation Sans" font-size="14.39" fill="#00ff00" stroke="#00ff00" stroke-width="0.25" text-anchor="middle" textLength="8" lengthAdjust="spacingAndGlyphs">35</text>
<text x="622" y="912" font-family="Liberation Sans" font-size="14.39" fill="#00ff00" stroke="#00ff00" stroke-width="0.25" text-anchor="middle" textLength="12" lengthAdjust="spacingAndGlyphs">362</text>
<text x="743" y="912" font-family="Liberation Sans" font-size="14.39" fill="#00ff00" stroke="#00ff00" stroke-width="0.25" text-anchor="middle" textLength="8" lengthAdjust="spacingAndGlyphs">35</text>
<text transform="translate(782,701) rotate(-90)" x="0" y="4.50" font-family="Liberation Sans" font-size="13.64" fill="#00ff00" stroke="#00ff00" stroke-width="0.25" text-anchor="middle" textLength="5" lengthAdjust="spacingAndGlyphs">9</text>
<text transform="translate(782,891) rotate(-90)" x="0" y="4.50" font-family="Liberation Sans" font-size="13.64" fill="#00ff00" stroke="#00ff00" stroke-width="0.25" text-anchor="middle" textLength="5" lengthAdjust="spacingAndGlyphs">9</text>
<text x="1052" y="832" font-family="Liberation Sans" font-size="9.09" fill="#ffffff" stroke="#ffffff" stroke-width="0.25" text-anchor="start" textLength="13" lengthAdjust="spacingAndGlyphs" font-weight="bold">Note:</text>
<text x="1052" y="865" font-family="Liberation Sans" font-size="9.85" fill="#ffffff" stroke="#ffffff" stroke-width="0.25" text-anchor="start" textLength="14" lengthAdjust="spacingAndGlyphs" font-weight="bold">Scale</text>
<text x="1080" y="877" font-family="Liberation Sans" font-size="15.91" fill="#00ff00" stroke="#00ff00" stroke-width="0.25" text-anchor="start" textLength="10.5" lengthAdjust="spacingAndGlyphs">1:4</text>
<text x="1138" y="865" font-family="Liberation Sans" font-size="9.85" fill="#ffffff" stroke="#ffffff" stroke-width="0.25" text-anchor="start" textLength="13" lengthAdjust="spacingAndGlyphs" font-weight="bold">Data</text>
<text x="1138" y="883" font-family="Liberation Sans" font-size="10.61" fill="#ffffff" stroke="#ffffff" stroke-width="0.25" text-anchor="start" textLength="25" lengthAdjust="spacingAndGlyphs" font-weight="bold">Peso Kg.</text>
<text x="1171" y="884" font-family="Liberation Sans" font-size="14.39" fill="#00ff00" stroke="#00ff00" stroke-width="0.25" text-anchor="start" textLength="14" lengthAdjust="spacingAndGlyphs">135</text>
<text x="1063" y="911" font-family="Liberation Sans" font-size="18.18" fill="#ffffff" stroke="#ffffff" stroke-width="0.25" text-anchor="start" textLength="57" lengthAdjust="spacingAndGlyphs" font-weight="bold">Fronema</text>
<text x="1125" y="911" font-family="Liberation Sans" font-size="18.18" fill="#ffffff" stroke="#ffffff" stroke-width="0.25" text-anchor="start" textLength="14" lengthAdjust="spacingAndGlyphs">Srl</text>
<text x="1170" y="900" font-family="Liberation Sans" font-size="9.85" fill="#ffffff" stroke="#ffffff" stroke-width="0.25" text-anchor="start" textLength="10" lengthAdjust="spacingAndGlyphs" font-weight="bold">Dis.</text>
<text x="1189" y="915" font-family="Liberation Sans" font-size="19.70" fill="#00ff00" stroke="#00ff00" stroke-width="0.25" text-anchor="start" textLength="17" lengthAdjust="spacingAndGlyphs">C01</text>
<text x="1313" y="834" font-family="Liberation Sans" font-size="10.61" fill="#ffffff" stroke="#ffffff" stroke-width="0.25" text-anchor="start" textLength="16" lengthAdjust="spacingAndGlyphs" font-weight="bold">Foglio</text>
<text x="1316" y="849" font-family="Liberation Sans" font-size="14.39" fill="#00ff00" stroke="#00ff00" stroke-width="0.25" text-anchor="start" textLength="12" lengthAdjust="spacingAndGlyphs">1/1</text>
<text x="1228" y="866" font-family="Liberation Sans" font-size="10.61" fill="#ffffff" stroke="#ffffff" stroke-width="0.25" text-anchor="start" textLength="27" lengthAdjust="spacingAndGlyphs" font-weight="bold">Controllo:</text>
<text x="1228" y="883" font-family="Liberation Sans" font-size="10.61" fill="#ffffff" stroke="#ffffff" stroke-width="0.25" text-anchor="start" textLength="27" lengthAdjust="spacingAndGlyphs" font-weight="bold">Disegnato</text>
<text x="1322" y="902" font-family="Liberation Sans" font-size="10.61" fill="#ffffff" stroke="#ffffff" stroke-width="0.25" text-anchor="start" textLength="11" lengthAdjust="spacingAndGlyphs" font-weight="bold">Rev.</text>
<text x="1327" y="916" font-family="Liberation Sans" font-size="6.82" fill="#00ff00" stroke="#00ff00" stroke-width="0.25" text-anchor="start" textLength="4" lengthAdjust="spacingAndGlyphs" font-weight="bold">o</text>
<text x="912.5" y="916.7" font-family="Liberation Sans" font-size="21.5" font-weight="bold" fill="#000" stroke="#fff" stroke-width="0.9" textLength="129" lengthAdjust="spacingAndGlyphs">IRONCAD.it</text>
<g shape-rendering="crispEdges"><polygon points="996.8,384.8 1126.0,469.3 1320.7,352.5 1191.5,268.0" fill="none" stroke="#fff" stroke-width="1.8"/>
<polygon points="1004.6,385.0 1126.0,464.4 1312.9,352.3 1191.5,272.8" fill="none" stroke="#fff" stroke-width="1.8"/>
<line x1="996.8" y1="438.0" x2="996.8" y2="384.8" stroke="#fff" stroke-width="1.8"/>
<line x1="1126.0" y1="522.5" x2="1126.0" y2="469.3" stroke="#fff" stroke-width="1.8"/>
<line x1="1320.7" y1="405.7" x2="1320.7" y2="352.5" stroke="#fff" stroke-width="1.8"/>
<line x1="999.4" y1="438.2" x2="999.4" y2="388.0" stroke="#fff" stroke-width="1.8"/>
<line x1="1128.6" y1="519.5" x2="1128.6" y2="469.2" stroke="#fff" stroke-width="1.8"/>
<line x1="1318.1" y1="402.5" x2="1318.1" y2="350.8" stroke="#fff" stroke-width="1.8"/>
<polyline points="996.8,438.0 1126.0,522.5 1320.7,405.7" fill="none" stroke="#fff" stroke-width="1.8"/>
<line x1="1126.4" y1="520.3" x2="1171.0" y2="493.5" stroke="#fff" stroke-width="1.8"/>
<line x1="1126.4" y1="522.2" x2="1126.4" y2="520.3" stroke="#fff" stroke-width="1.8"/>
<line x1="1171.0" y1="495.5" x2="1171.0" y2="493.5" stroke="#fff" stroke-width="1.8"/>
<line x1="1176.2" y1="490.4" x2="1220.8" y2="463.7" stroke="#fff" stroke-width="1.8"/>
<line x1="1176.2" y1="492.4" x2="1176.2" y2="490.4" stroke="#fff" stroke-width="1.8"/>
<line x1="1220.8" y1="465.6" x2="1220.8" y2="463.7" stroke="#fff" stroke-width="1.8"/>
<line x1="1226.0" y1="460.6" x2="1270.5" y2="433.8" stroke="#fff" stroke-width="1.8"/>
<line x1="1226.0" y1="462.5" x2="1226.0" y2="460.6" stroke="#fff" stroke-width="1.8"/>
<line x1="1270.5" y1="435.8" x2="1270.5" y2="433.8" stroke="#fff" stroke-width="1.8"/>
<line x1="1275.7" y1="430.7" x2="1320.3" y2="404.0" stroke="#fff" stroke-width="1.8"/>
<line x1="1275.7" y1="432.7" x2="1275.7" y2="430.7" stroke="#fff" stroke-width="1.8"/>
<line x1="1320.3" y1="405.9" x2="1320.3" y2="404.0" stroke="#fff" stroke-width="1.8"/>
<line x1="996.8" y1="436.0" x2="1126.0" y2="520.5" stroke="#fff" stroke-width="1.8"/>
<line x1="1043.5" y1="410.4" x2="1176.3" y2="330.7" stroke="#fff" stroke-width="1.8"/>
<line x1="1206.6" y1="331.5" x2="1274.0" y2="375.6" stroke="#fff" stroke-width="1.8"/>
<line x1="1046.1" y1="408.9" x2="1128.6" y2="462.9" stroke="#fff" stroke-width="1.8"/>
<line x1="1050.4" y1="406.3" x2="1133.0" y2="460.3" stroke="#fff" stroke-width="1.8"/>
<line x1="1095.9" y1="379.0" x2="1178.4" y2="433.0" stroke="#fff" stroke-width="1.8"/>
<line x1="1100.2" y1="376.4" x2="1182.7" y2="430.4" stroke="#fff" stroke-width="1.8"/>
<line x1="1145.6" y1="349.2" x2="1228.2" y2="403.2" stroke="#fff" stroke-width="1.8"/>
<line x1="1149.9" y1="346.6" x2="1232.5" y2="400.6" stroke="#fff" stroke-width="1.8"/>
<line x1="1047.0" y1="407.9" x2="1129.9" y2="462.1" stroke="#fff" stroke-width="1.8"/>
<line x1="1096.7" y1="378.0" x2="1179.7" y2="432.3" stroke="#fff" stroke-width="1.8"/>
<line x1="1146.5" y1="348.2" x2="1229.4" y2="402.4" stroke="#fff" stroke-width="1.8"/>
<polygon points="1176.3,330.7 1176.3,274.1 1191.5,265.0 1206.6,274.9 1206.6,331.5" fill="#000" stroke="none"/>
<polyline points="1176.3,330.7 1176.3,274.1 1206.6,274.9 1206.6,331.5" fill="none" stroke="#fff" stroke-width="1.8"/>
<line x1="1176.3" y1="330.7" x2="1206.6" y2="331.5" stroke="#fff" stroke-width="1.8"/>
<polyline points="1176.3,274.1 1191.5,265.0 1206.6,274.9" fill="none" stroke="#fff" stroke-width="1.8"/>
<polygon points="1141.2,455.4 1141.2,447.5 1126.0,456.6 1110.9,446.8 1110.9,454.6 1126.0,464.4" fill="#000" stroke="none"/>
<polyline points="1141.2,455.4 1141.2,447.5 1126.0,456.6 1110.9,446.8 1110.9,454.6" fill="none" stroke="#fff" stroke-width="1.8"/>
<line x1="1126.0" y1="464.4" x2="1126.0" y2="456.6" stroke="#fff" stroke-width="1.8"/>
<line x1="1141.2" y1="447.5" x2="1110.9" y2="446.8" stroke="#fff" stroke-width="1.8"/>
<polygon points="1019.6,394.9 1019.6,387.0 1004.6,377.2 1019.7,368.1 1019.7,375.9" fill="#000" stroke="none"/>
<polyline points="1019.6,394.9 1019.6,387.0 1004.6,377.2 1019.7,368.1" fill="none" stroke="#fff" stroke-width="1.8"/>
<line x1="1019.7" y1="368.1" x2="1019.6" y2="387.0" stroke="#fff" stroke-width="1.8"/>
<line x1="1019.7" y1="368.1" x2="1019.7" y2="375.9" stroke="#fff" stroke-width="1.8"/>
<line x1="1019.7" y1="376.4" x2="1019.7" y2="394.9" stroke="#fff" stroke-width="1.8"/>
<polygon points="1297.8,361.4 1297.8,353.6 1312.9,344.5 1297.9,334.6 1297.9,342.4" fill="#000" stroke="none"/>
<polyline points="1297.8,361.4 1297.8,353.6 1312.9,344.5 1297.9,334.6" fill="none" stroke="#fff" stroke-width="1.8"/>
<line x1="1297.8" y1="353.6" x2="1297.9" y2="334.6" stroke="#fff" stroke-width="1.8"/>
<line x1="1297.9" y1="334.6" x2="1297.9" y2="342.4" stroke="#fff" stroke-width="1.8"/>
<line x1="1297.9" y1="342.9" x2="1297.9" y2="361.3" stroke="#fff" stroke-width="1.8"/>
<polygon points="1044.8,444.3 1043.6,443.3 1042.5,442.1 1041.5,440.7 1040.6,439.2 1040.0,437.6 1039.6,436.1 1039.4,434.6 1039.6,433.4 1040.0,432.3 1040.6,431.6 1041.5,431.2 1042.5,431.1 1043.6,431.4 1044.8,432.1 1078.0,453.8 1079.2,454.7 1080.3,455.9 1081.3,457.3 1082.2,458.8 1082.8,460.4 1083.2,461.9 1083.4,463.4 1083.2,464.6 1082.8,465.7 1082.2,466.4 1081.3,466.8 1080.3,466.9 1079.2,466.6 1078.0,466.0" fill="none" stroke="#fff" stroke-width="1.8"/>
<polygon points="1046.1,442.0 1045.2,441.3 1044.3,440.4 1043.6,439.3 1042.9,438.2 1042.4,437.0 1042.1,435.8 1042.0,434.7 1042.1,433.7 1042.4,433.0 1042.9,432.4 1043.6,432.1 1044.3,432.1 1045.2,432.3 1046.1,432.8 1079.3,454.4 1080.2,455.2 1081.1,456.1 1081.8,457.1 1082.5,458.3 1083.0,459.5 1083.3,460.7 1083.4,461.8 1083.3,462.7 1083.0,463.5 1082.5,464.1 1081.8,464.4 1081.1,464.4 1080.2,464.2 1079.3,463.7" fill="none" stroke="#fff" stroke-width="1.8"/>
<polygon points="1235.6,329.8 1234.4,328.8 1233.3,327.7 1232.3,326.3 1231.4,324.7 1230.8,323.2 1230.4,321.6 1230.2,320.2 1230.4,318.9 1230.8,317.9 1231.4,317.1 1232.3,316.7 1233.3,316.7 1234.4,317.0 1235.6,317.6 1268.8,339.3 1270.0,340.2 1271.1,341.4 1272.2,342.8 1273.0,344.3 1273.6,345.9 1274.0,347.5 1274.2,348.9 1274.0,350.2 1273.6,351.2 1273.0,351.9 1272.2,352.3 1271.1,352.4 1270.0,352.1 1268.8,351.5" fill="none" stroke="#fff" stroke-width="1.8"/>
<polygon points="1234.3,329.1 1233.4,328.4 1232.6,327.5 1231.8,326.4 1231.1,325.3 1230.6,324.1 1230.3,322.9 1230.2,321.8 1230.3,320.8 1230.6,320.0 1231.1,319.5 1231.8,319.2 1232.6,319.1 1233.4,319.3 1234.3,319.8 1267.5,341.5 1268.4,342.2 1269.3,343.1 1270.1,344.2 1270.7,345.4 1271.2,346.6 1271.5,347.7 1271.6,348.8 1271.5,349.8 1271.2,350.6 1270.7,351.1 1270.1,351.4 1269.3,351.5 1268.4,351.3 1267.5,350.8" fill="none" stroke="#fff" stroke-width="1.8"/>
<polygon points="1142.6,767.7 1179.0,746.4 1077.4,685.7 1041.0,707.0" fill="none" stroke="#fff" stroke-width="1.35"/>
<line x1="1142.6" y1="771.4" x2="1179.0" y2="750.1" stroke="#fff" stroke-width="1.35"/>
<polygon points="1182.5,744.4 1218.9,723.2 1117.3,662.5 1080.9,683.7" fill="none" stroke="#fff" stroke-width="1.35"/>
<line x1="1182.5" y1="748.1" x2="1218.9" y2="726.9" stroke="#fff" stroke-width="1.35"/>
<polygon points="1222.4,721.1 1258.8,699.9 1157.2,639.2 1120.8,660.4" fill="none" stroke="#fff" stroke-width="1.35"/>
<line x1="1222.4" y1="724.8" x2="1258.8" y2="703.6" stroke="#fff" stroke-width="1.35"/>
<polygon points="1262.3,697.9 1298.7,676.6 1197.1,615.9 1160.7,637.2" fill="none" stroke="#fff" stroke-width="1.35"/>
<line x1="1262.3" y1="701.6" x2="1298.7" y2="680.3" stroke="#fff" stroke-width="1.35"/>
<line x1="1179.0" y1="750.1" x2="1179.0" y2="746.4" stroke="#fff" stroke-width="1.35"/>
<line x1="1179.0" y1="748.5" x2="1078.5" y2="688.4" stroke="#fff" stroke-width="1.35"/>
<line x1="1218.9" y1="726.9" x2="1218.9" y2="723.2" stroke="#fff" stroke-width="1.35"/>
<line x1="1218.9" y1="725.2" x2="1118.3" y2="665.2" stroke="#fff" stroke-width="1.35"/>
<line x1="1258.8" y1="703.6" x2="1258.8" y2="699.9" stroke="#fff" stroke-width="1.35"/>
<line x1="1258.8" y1="702.0" x2="1158.2" y2="641.9" stroke="#fff" stroke-width="1.35"/>
<line x1="1041.0" y1="710.7" x2="1142.6" y2="771.4" stroke="#fff" stroke-width="1.35"/>
<line x1="1041.0" y1="752.0" x2="1041.0" y2="707.0" stroke="#fff" stroke-width="1.35"/>
<line x1="1142.6" y1="812.7" x2="1142.6" y2="767.7" stroke="#fff" stroke-width="1.35"/>
<line x1="1298.7" y1="721.6" x2="1298.7" y2="676.6" stroke="#fff" stroke-width="1.35"/>
<line x1="1043.0" y1="752.4" x2="1043.0" y2="711.9" stroke="#fff" stroke-width="1.35"/>
<line x1="1144.7" y1="810.7" x2="1144.7" y2="770.2" stroke="#fff" stroke-width="1.35"/>
<line x1="1296.7" y1="719.6" x2="1296.7" y2="679.1" stroke="#fff" stroke-width="1.35"/>
<polyline points="1041.0,752.0 1142.6,812.7 1298.7,721.6" fill="none" stroke="#fff" stroke-width="1.35"/>
<polyline points="1059.0,759.1 1059.0,765.7 1047.2,758.6 1047.2,752.0" fill="none" stroke="#fff" stroke-width="1.35"/>
<line x1="1055.9" y1="760.9" x2="1059.0" y2="759.1" stroke="#fff" stroke-width="1.35"/>
<polyline points="1142.7,809.1 1142.7,815.7 1154.8,808.6 1154.8,802.0" fill="none" stroke="#fff" stroke-width="1.35"/>
<polyline points="1142.7,815.7 1154.8,808.6" fill="none" stroke="#fff" stroke-width="1.35"/>
<line x1="1142.7" y1="809.1" x2="1142.7" y2="815.7" stroke="#fff" stroke-width="1.35"/>
<line x1="1130.8" y1="808.6" x2="1142.7" y2="815.7" stroke="#fff" stroke-width="1.35"/>
<polyline points="1280.4,728.7 1280.4,735.3 1292.5,728.2 1292.5,721.6" fill="none" stroke="#fff" stroke-width="1.35"/>
<polygon points="1078.8,760.9 1076.6,759.0 1075.1,756.2 1074.5,753.2 1075.1,751.0 1076.6,750.0 1078.8,750.6 1104.8,766.2 1107.0,768.1 1108.5,771.0 1109.1,773.9 1108.5,776.1 1107.0,777.1 1104.8,776.5" fill="none" stroke="#fff" stroke-width="1.35"/>
<polygon points="1079.4,758.9 1078.0,757.6 1077.0,755.6 1076.6,753.7 1077.0,752.1 1078.0,751.5 1079.4,751.9 1105.5,767.4 1107.0,768.8 1108.0,770.7 1108.4,772.7 1108.0,774.2 1107.0,774.8 1105.5,774.5" fill="none" stroke="#fff" stroke-width="1.35"/></g>
</svg><!--/DRAWING-->
<svg class="a" style="left:228px;top:983px" width="200" height="17" viewBox="228 983 200 17">
<path d="M232.5 988v8M239.5 988.5l-5 3.5l5 3.5z" fill="#222" stroke="#222" stroke-width="0.8"/>
<path d="M253.5 988.5l-5 3.5l5 3.5z" fill="#222"/>
<path d="M265.5 988.5l5 3.5l-5 3.5z" fill="#222"/>
<path d="M280 988.5l5 3.5l-5 3.5zM287.5 988v8" fill="#222" stroke="#222" stroke-width="0.8"/>
<path d="M294 983 L302 999 H351 L359 983Z" fill="#d0d0d0" stroke="#eee" stroke-width="0.8"/>
</svg>
<div class="t" style="left:304px;top:985px;font-size:12.5px;color:#1a1a1a;font-weight:bold;letter-spacing:-0.3px">Modello</div>
<div class="a" style="left:1501px;top:164px;width:2px;height:836px;background:#6e6e6e"></div>
<div class="a" style="left:1503px;top:164px;width:2px;height:836px;background:#a0a0a0"></div>
<div class="t" style="left:1510px;top:170px;font-size:12px;color:#444;letter-spacing:-0.2px">Parte di Libreria</div>
<svg class="a" style="left:1660px;top:166px" width="94" height="90" viewBox="1660 166 94 90">
<path d="M1666 174h9l-4.5 4.5z" fill="#333"/>
<path d="M1686.5 171h6M1687.5 171v6h4v-6M1685.5 177h8M1689.5 177v5" stroke="#333" stroke-width="1.2" fill="none"/>
<path d="M1706.2 173l7.2 7.2M1713.4 173l-7.2 7.2" stroke="#333" stroke-width="1.5"/>
<rect x="1745" y="171" width="6" height="79" fill="#a0a0a0"/>
<rect x="1725.5" y="171.5" width="15" height="15" fill="none" stroke="#444" stroke-width="0.8" stroke-dasharray="1 1"/>
<rect x="1727" y="177" width="8" height="7" fill="#5a9ae0" stroke="#2a5a90" stroke-width="0.8"/>
<rect x="1734" y="172" width="6" height="5" fill="#fff"/>
</svg>
<div class="t" style="left:1738px;top:189px;font-size:11.5px;color:#333;transform-origin:0 0;transform:rotate(90deg);letter-spacing:0.4px">Views Tree</div>
<div class="a" style="left:1506px;top:190px;width:214px;height:2px;background:#f0f0f0"></div>
<svg class="a" style="left:1510px;top:195px" width="170" height="32" viewBox="1510 195 170 32">
<defs><radialGradient id="gg" cx="0.4" cy="0.35" r="0.7"><stop offset="0" stop-color="#8af06a"/><stop offset="1" stop-color="#1a9a1a"/></radialGradient>
<radialGradient id="gg2" cx="0.4" cy="0.35" r="0.7"><stop offset="0" stop-color="#b0e0a0"/><stop offset="1" stop-color="#6aaa5a"/></radialGradient></defs>
<circle cx="1527.7" cy="211" r="11" fill="url(#gg)"/>
<path d="M1533 211h-10M1527 206l-5 5l5 5" stroke="#fff" stroke-width="2.6" fill="none"/>
<circle cx="1561" cy="211" r="11" fill="url(#gg2)"/>
<path d="M1556 211h10M1562 206l5 5l-5 5" stroke="#e8f5e0" stroke-width="2.6" fill="none"/>
<path d="M1585 206h6l2 2h8v13h-16z" fill="#e8c050"/><path d="M1585 212h17l-2 10h-16z" fill="#f8d870"/>
<path d="M1594 218q0-8 6-12l-3-1l6-3l1 6l-2-2q-4 4-4 12z" fill="#2aa02a"/>
<circle cx="1629" cy="208" r="6.5" fill="#c8e4f8" stroke="#3a7ac0" stroke-width="1.5"/>
<path d="M1624 213l-6 7" stroke="#e08020" stroke-width="3"/>
<rect x="1648.5" y="200.5" width="22" height="20" fill="#fff" stroke="#2a6ac0" stroke-width="1.5"/>
<rect x="1648.5" y="200.5" width="22" height="3" fill="#2a6ac0"/>
<rect x="1652" y="206" width="3" height="3" fill="#9a8ad0"/><rect x="1658" y="206" width="3" height="3" fill="#2a8ae0"/><rect x="1664" y="206" width="3" height="3" fill="#2aa040"/>
<rect x="1652" y="212" width="3" height="3" fill="#f07040"/><rect x="1658" y="212" width="3" height="3" fill="#2a3aa0"/><rect x="1664" y="212" width="3" height="3" fill="#d0a020"/>
</svg>
<div class="a" style="left:1512px;top:233px;width:183px;height:23px;background:#fff"></div>
<div class="a" style="left:1514px;top:235px;width:178px;height:19px;background:#9a9a9a"></div>
<div class="t" style="left:1516px;top:238px;font-size:11.5px;color:#222;letter-spacing:-0.6px">it-IT\RIVET\COARSE RIVET\</div>
<div class="a" style="left:1695px;top:233px;width:19px;height:23px;background:#d4d4d4;border:1px solid #333"></div>
<svg class="a" style="left:1700px;top:242px" width="8" height="5"><path d="M1 1h5l-2.5 3z" fill="#333"/></svg>
<div class="a" style="left:1511px;top:262px;width:204px;height:409px;background:#d4d4d4;border:1px solid #8aa0b8"></div>
<div class="a" style="left:1512px;top:263px;width:202px;height:23px;background:#acacac"></div>
<div class="t" style="left:1516px;top:268.8px;font-size:12px;color:#222;letter-spacing:-0.1px">Nome</div>
<div class="t" style="left:1535px;top:291.1px;font-size:11.3px;color:#1a1a1a;letter-spacing:-0.15px">GB/T 863.1-1986 SEMICIRCLE H...</div>
<svg class="a" style="left:1516px;top:289.3px" width="15" height="16" viewBox="0 0 15 16">
<path d="M1.2 3 L3 1 H11 L12.8 3 V5.8 L11 7.2 H3 L1.2 5.8 Z" fill="#cfcfcf" stroke="#111" stroke-width="1.2"/>
<path d="M5 1.5v5.5M9 1.5v5.5" stroke="#444" stroke-width="0.8"/><path d="M5.5 2.5h3v4h-3z" fill="#fff"/>
<rect x="4" y="7.2" width="6" height="7.8" fill="#e6e6e6" stroke="#111" stroke-width="1.2"/>
<path d="M4.5 9.3h5M4.5 11.3h5M4.5 13.3h5" stroke="#777" stroke-width="0.9"/></svg>
<div class="t" style="left:1535px;top:310.1px;font-size:11.3px;color:#1a1a1a;letter-spacing:-0.15px">GB/T 863.2-1986 SMALL SEMICI...</div>
<svg class="a" style="left:1516px;top:308.3px" width="15" height="16" viewBox="0 0 15 16">
<path d="M1.2 3 L3 1 H11 L12.8 3 V5.8 L11 7.2 H3 L1.2 5.8 Z" fill="#cfcfcf" stroke="#111" stroke-width="1.2"/>
<path d="M5 1.5v5.5M9 1.5v5.5" stroke="#444" stroke-width="0.8"/><path d="M5.5 2.5h3v4h-3z" fill="#fff"/>
<rect x="4" y="7.2" width="6" height="7.8" fill="#e6e6e6" stroke="#111" stroke-width="1.2"/>
<path d="M4.5 9.3h5M4.5 11.3h5M4.5 13.3h5" stroke="#777" stroke-width="0.9"/></svg>
<div class="t" style="left:1535px;top:329.1px;font-size:11.3px;color:#1a1a1a;letter-spacing:-0.15px">GB/T 864-1986 FLAT TAPER HEA...</div>
<svg class="a" style="left:1516px;top:327.3px" width="15" height="16" viewBox="0 0 15 16">
<path d="M1.2 3 L3 1 H11 L12.8 3 V5.8 L11 7.2 H3 L1.2 5.8 Z" fill="#cfcfcf" stroke="#111" stroke-width="1.2"/>
<path d="M5 1.5v5.5M9 1.5v5.5" stroke="#444" stroke-width="0.8"/><path d="M5.5 2.5h3v4h-3z" fill="#fff"/>
<rect x="4" y="7.2" width="6" height="7.8" fill="#e6e6e6" stroke="#111" stroke-width="1.2"/>
<path d="M4.5 9.3h5M4.5 11.3h5M4.5 13.3h5" stroke="#777" stroke-width="0.9"/></svg>
<div class="t" style="left:1535px;top:348.1px;font-size:11.3px;color:#1a1a1a;letter-spacing:-0.15px">GB/T 865-1986 COUNTERSUNK ...</div>
<svg class="a" style="left:1516px;top:346.3px" width="15" height="16" viewBox="0 0 15 16">
<path d="M1.2 3 L3 1 H11 L12.8 3 V5.8 L11 7.2 H3 L1.2 5.8 Z" fill="#cfcfcf" stroke="#111" stroke-width="1.2"/>
<path d="M5 1.5v5.5M9 1.5v5.5" stroke="#444" stroke-width="0.8"/><path d="M5.5 2.5h3v4h-3z" fill="#fff"/>
<rect x="4" y="7.2" width="6" height="7.8" fill="#e6e6e6" stroke="#111" stroke-width="1.2"/>
<path d="M4.5 9.3h5M4.5 11.3h5M4.5 13.3h5" stroke="#777" stroke-width="0.9"/></svg>
<div class="a" style="left:1532px;top:363px;width:182px;height:19px;background:#b8b8b8"></div>
<div class="t" style="left:1535px;top:367.1px;font-size:11.3px;color:#1a1a1a;letter-spacing:-0.15px">GB/T 866-1986O VAL COUNTER...</div>
<svg class="a" style="left:1516px;top:365.3px" width="15" height="16" viewBox="0 0 15 16">
<path d="M1.2 3 L3 1 H11 L12.8 3 V5.8 L11 7.2 H3 L1.2 5.8 Z" fill="#cfcfcf" stroke="#111" stroke-width="1.2"/>
<path d="M5 1.5v5.5M9 1.5v5.5" stroke="#444" stroke-width="0.8"/><path d="M5.5 2.5h3v4h-3z" fill="#fff"/>
<rect x="4" y="7.2" width="6" height="7.8" fill="#e6e6e6" stroke="#111" stroke-width="1.2"/>
<path d="M4.5 9.3h5M4.5 11.3h5M4.5 13.3h5" stroke="#777" stroke-width="0.9"/></svg>
<div class="t" style="left:1535px;top:386.1px;font-size:11.3px;color:#1a1a1a;letter-spacing:-0.15px">GB/T 867-1986 HALF-ROUND H...</div>
<svg class="a" style="left:1516px;top:384.3px" width="15" height="16" viewBox="0 0 15 16">
<path d="M1.2 3 L3 1 H11 L12.8 3 V5.8 L11 7.2 H3 L1.2 5.8 Z" fill="#cfcfcf" stroke="#111" stroke-width="1.2"/>
<path d="M5 1.5v5.5M9 1.5v5.5" stroke="#444" stroke-width="0.8"/><path d="M5.5 2.5h3v4h-3z" fill="#fff"/>
<rect x="4" y="7.2" width="6" height="7.8" fill="#e6e6e6" stroke="#111" stroke-width="1.2"/>
<path d="M4.5 9.3h5M4.5 11.3h5M4.5 13.3h5" stroke="#777" stroke-width="0.9"/></svg>
<div class="t" style="left:1535px;top:405.1px;font-size:11.3px;color:#1a1a1a;letter-spacing:-0.15px">GB/T 868-1986 HEMI TAPER HE...</div>
<svg class="a" style="left:1516px;top:403.3px" width="15" height="16" viewBox="0 0 15 16">
<path d="M1.2 3 L3 1 H11 L12.8 3 V5.8 L11 7.2 H3 L1.2 5.8 Z" fill="#cfcfcf" stroke="#111" stroke-width="1.2"/>
<path d="M5 1.5v5.5M9 1.5v5.5" stroke="#444" stroke-width="0.8"/><path d="M5.5 2.5h3v4h-3z" fill="#fff"/>
<rect x="4" y="7.2" width="6" height="7.8" fill="#e6e6e6" stroke="#111" stroke-width="1.2"/>
<path d="M4.5 9.3h5M4.5 11.3h5M4.5 13.3h5" stroke="#777" stroke-width="0.9"/></svg>
<div class="a" style="left:1512px;top:676px;width:49px;height:21px;background:#a5a5a5;border-top:1px solid #fff;border-left:1px solid #fff"></div>
<div class="a" style="left:1561px;top:678px;width:63px;height:19px;background:#a5a5a5;border-top:1px solid #fff;border-right:1px solid #777"></div>
<div class="t" style="left:1518px;top:682px;font-size:12px;color:#222;letter-spacing:-0.2px">Grafica</div>
<div class="t" style="left:1564px;top:681px;font-size:12px;color:#222;letter-spacing:-0.2px">Preferenze</div>
<div class="a" style="left:1511px;top:696px;width:204px;height:298px;background:#000;border-top:1px solid #fff;border-left:1px solid #a0a0a0;border-right:1px solid #777;border-bottom:1px solid #ddd"></div>
<!--PREVIEW--><svg class="a" style="left:1512px;top:697px" width="202" height="296" viewBox="1512 697 202 296" shape-rendering="crispEdges"><path d="M1570.7 821.8 L1564 833 L1558.8 841.4 L1558.8 850 L1563 860 L1568.6 868.5 M1572.5 822 L1581 833.7 M1572.5 868.5 L1581 856" fill="none" stroke="#fff" stroke-width="1.6" shape-rendering="geometricPrecision"/>
<line x1="1569.5" y1="822" x2="1569.5" y2="868.5" stroke="#ffffff" stroke-width="1.4"/>
<line x1="1572.5" y1="822" x2="1572.5" y2="868.5" stroke="#ffffff" stroke-width="1.4"/>
<rect x="1581" y="833.7" width="90" height="22.3" fill="none" stroke="#fff" stroke-width="1.6"/>
<line x1="1551" y1="845.5" x2="1678" y2="845.5" stroke="#ff0000" stroke-width="1" stroke-dasharray="62 3 5 3 23 3 5 3 14 3"/>
<line x1="1581.5" y1="815" x2="1581.5" y2="876" stroke="#ff0000" stroke-width="1"/>
<line x1="1581.5" y1="876" x2="1581.5" y2="891" stroke="#00ff00" stroke-width="1"/>
<line x1="1559.5" y1="787.5" x2="1581.5" y2="787.5" stroke="#00ff00" stroke-width="1"/>
<line x1="1559.5" y1="783" x2="1559.5" y2="841" stroke="#00ff00" stroke-width="1"/>
<line x1="1581.5" y1="783" x2="1581.5" y2="815" stroke="#00ff00" stroke-width="1"/>
<line x1="1569.5" y1="779" x2="1569.5" y2="784" stroke="#00ff00" stroke-width="1"/>
<line x1="1569.5" y1="807" x2="1569.5" y2="822" stroke="#00ff00" stroke-width="1"/>
<line x1="1572.5" y1="811" x2="1572.5" y2="822" stroke="#00ff00" stroke-width="1"/>
<line x1="1556" y1="815.5" x2="1586" y2="815.5" stroke="#00ff00" stroke-width="1"/>
<line x1="1530" y1="822.5" x2="1569" y2="822.5" stroke="#00ff00" stroke-width="1"/>
<line x1="1530" y1="868.5" x2="1569" y2="868.5" stroke="#00ff00" stroke-width="1"/>
<line x1="1535.5" y1="822.5" x2="1535.5" y2="868.5" stroke="#00ff00" stroke-width="1"/>
<line x1="1527" y1="845.5" x2="1534" y2="845.5" stroke="#00ff00" stroke-width="1"/>
<line x1="1527" y1="848.5" x2="1534" y2="848.5" stroke="#00ff00" stroke-width="1"/>
<line x1="1534" y1="827" x2="1534" y2="830" stroke="#00ff00" stroke-width="1"/>
<line x1="1534" y1="859" x2="1534" y2="862" stroke="#00ff00" stroke-width="1"/>
<line x1="1556" y1="886.5" x2="1594.5" y2="886.5" stroke="#00ff00" stroke-width="1"/>
<line x1="1569.5" y1="868.5" x2="1569.5" y2="911" stroke="#00ff00" stroke-width="1"/>
<line x1="1573.5" y1="879" x2="1573.5" y2="884" stroke="#00ff00" stroke-width="1"/>
<line x1="1569.5" y1="906.5" x2="1671" y2="906.5" stroke="#00ff00" stroke-width="1"/>
<line x1="1671" y1="856" x2="1671" y2="911" stroke="#00ff00" stroke-width="1"/>
<line x1="1619" y1="899" x2="1619" y2="903" stroke="#00ff00" stroke-width="1"/>
<line x1="1671" y1="834.5" x2="1699" y2="834.5" stroke="#00ff00" stroke-width="1"/>
<line x1="1671" y1="856.5" x2="1699" y2="856.5" stroke="#00ff00" stroke-width="1"/>
<line x1="1694.5" y1="834.5" x2="1694.5" y2="856.5" stroke="#00ff00" stroke-width="1"/>
<line x1="1686" y1="846.5" x2="1693" y2="846.5" stroke="#00ff00" stroke-width="1"/></svg><!--/PREVIEW-->
<div id="status" class="a"></div>
<div class="st" style="left:12px">Rotazione:</div>
<div class="st" style="left:1050px">Sym</div>
<div class="st" style="left:1151px">@167.540 &lt;0.000°</div>
<div class="st" style="left:1340px">Punto video</div>
<div class="st" style="left:1440px">Orto</div>
<div class="a" style="left:1473px;top:1028px;width:101px;height:22px;background:#363636"></div>
<div class="st" style="left:1483px">Larghezza Linea</div>
<div class="st" style="left:1583px">Input Dinamico</div>
<div class="st" style="left:1685px">Guida</div>
<svg class="a" style="left:1720px;top:1030px" width="34" height="20" viewBox="1720 1030 34 20">
<path d="M1724 1038h5l-2.5 3z" fill="#777"/>
<rect x="1748" y="1036" width="2" height="2" fill="#ccc"/><rect x="1745" y="1039" width="2" height="2" fill="#ccc"/><rect x="1748" y="1039" width="2" height="2" fill="#ccc"/>
<rect x="1742" y="1042" width="2" height="2" fill="#ccc"/><rect x="1745" y="1042" width="2" height="2" fill="#ccc"/><rect x="1748" y="1042" width="2" height="2" fill="#ccc"/>
</svg>
</body></html>
